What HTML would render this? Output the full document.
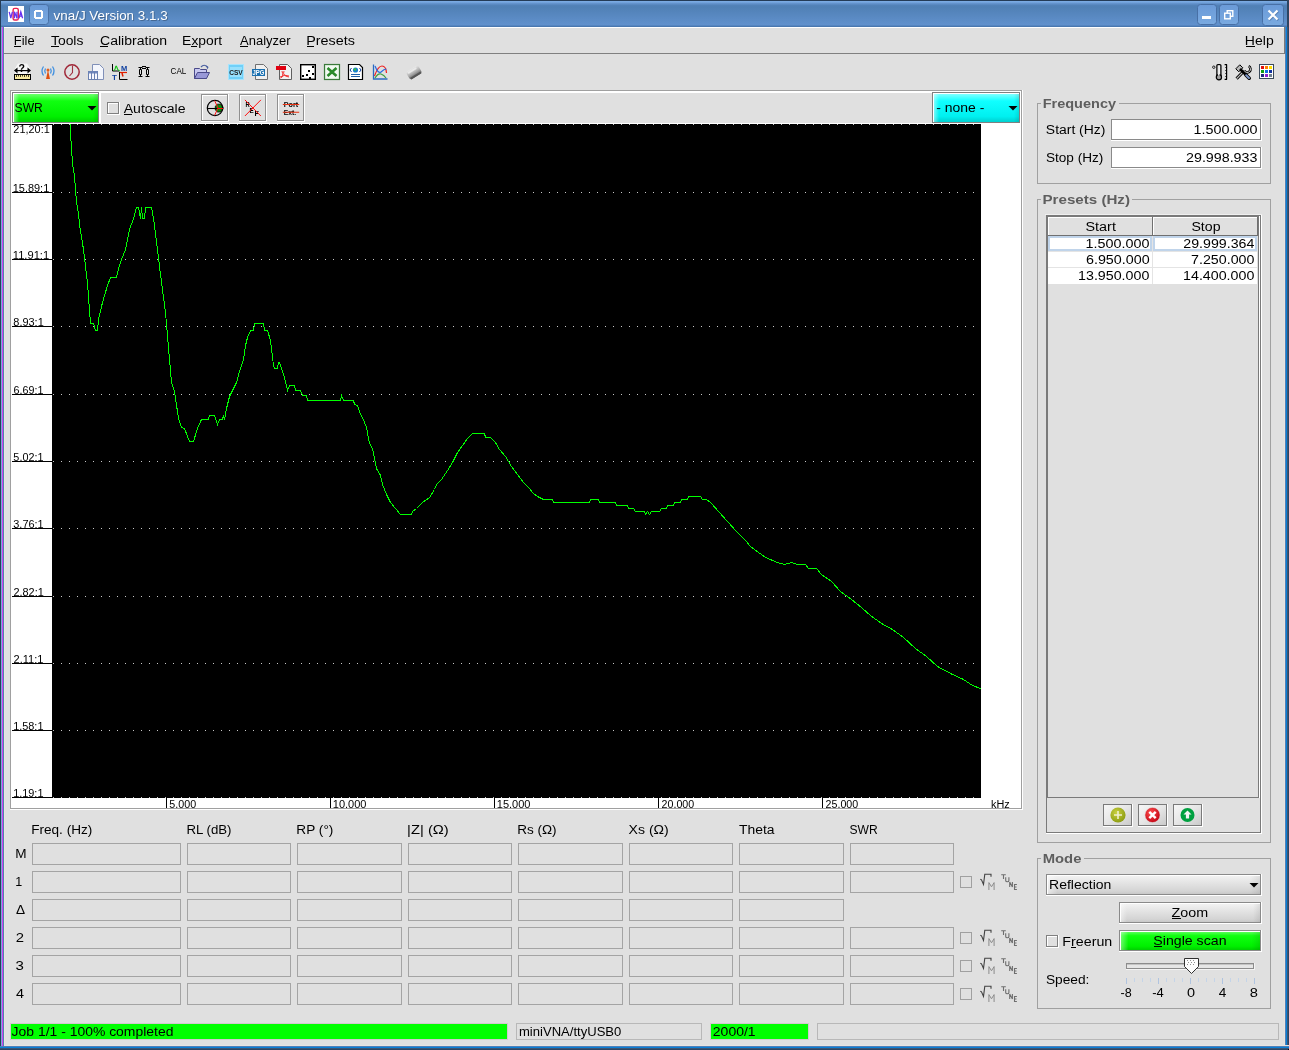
<!DOCTYPE html><html><head><meta charset="utf-8"><title>vna/J</title>
<style>html,body{margin:0;padding:0;background:#e0e0e0;overflow:hidden}svg{display:block;will-change:transform}</style></head><body>
<svg width="1289" height="1050" viewBox="0 0 1289 1050" style="font-family:'Liberation Sans', sans-serif">
<defs>
<linearGradient id="gTitle" x1="0" y1="0" x2="0" y2="27" gradientUnits="userSpaceOnUse">
<stop offset="0" stop-color="#243b56"/><stop offset="0.037" stop-color="#243b56"/>
<stop offset="0.04" stop-color="#7aaae2"/><stop offset="0.074" stop-color="#7aaae2"/>
<stop offset="0.12" stop-color="#6695cf"/><stop offset="0.2" stop-color="#5282b8"/>
<stop offset="0.26" stop-color="#5080b5"/><stop offset="0.93" stop-color="#6191cd"/>
<stop offset="0.963" stop-color="#4a78b0"/><stop offset="1" stop-color="#4a78b0"/>
</linearGradient>
<linearGradient id="gBtnT" x1="0" y1="0" x2="0" y2="1">
<stop offset="0" stop-color="#6a9ad8"/><stop offset="1" stop-color="#7aaae0"/></linearGradient>
<linearGradient id="gGreenV" x1="0" y1="0" x2="0" y2="1">
<stop offset="0" stop-color="#6cff6c"/><stop offset="0.25" stop-color="#10ff10"/><stop offset="0.8" stop-color="#00f000"/><stop offset="1" stop-color="#00d000"/></linearGradient>
<linearGradient id="gGreenH" x1="0" y1="0" x2="1" y2="0">
<stop offset="0" stop-color="#ffffff" stop-opacity="0.45"/><stop offset="0.06" stop-color="#ffffff" stop-opacity="0"/><stop offset="0.94" stop-color="#000" stop-opacity="0"/><stop offset="1" stop-color="#000" stop-opacity="0.10"/></linearGradient>
<linearGradient id="gCyanV" x1="0" y1="0" x2="0" y2="1">
<stop offset="0" stop-color="#80ffff"/><stop offset="0.25" stop-color="#10ffff"/><stop offset="0.8" stop-color="#00f0f0"/><stop offset="1" stop-color="#00d0d0"/></linearGradient>
<linearGradient id="gGray" x1="0" y1="0" x2="0" y2="1">
<stop offset="0" stop-color="#f4f4f4"/><stop offset="0.3" stop-color="#e8e8e8"/><stop offset="0.85" stop-color="#d4d4d4"/><stop offset="1" stop-color="#c8c8c8"/></linearGradient>
<linearGradient id="gGrayH" x1="0" y1="0" x2="1" y2="0">
<stop offset="0" stop-color="#ffffff" stop-opacity="0.5"/><stop offset="0.05" stop-color="#ffffff" stop-opacity="0"/><stop offset="0.95" stop-color="#000" stop-opacity="0"/><stop offset="1" stop-color="#000" stop-opacity="0.08"/></linearGradient>
<linearGradient id="gSmallBtn" x1="0" y1="0" x2="1" y2="1">
<stop offset="0" stop-color="#f8f8f8"/><stop offset="0.5" stop-color="#e6e6e6"/><stop offset="1" stop-color="#c8c8c8"/></linearGradient>
</defs>
<g shape-rendering="crispEdges">
<rect x="0" y="0" width="1289" height="1050" fill="#e0e0e0" />
<rect x="0" y="0" width="1289" height="27" fill="url(#gTitle)" />
<rect x="0" y="0" width="1" height="27" fill="#243b56" />
<rect x="1287" y="0" width="2" height="27" fill="#2e4562" />
</g>
<g>
<rect x="8" y="6" width="16" height="16" fill="#ffffff" shape-rendering="crispEdges"/>
<rect x="13.1" y="8.4" width="5.2" height="11.6" rx="1.6" fill="none" stroke="#e82050" stroke-width="1.4"/>
<path d="M9.2 11.8L10.8 18L12.4 11.8M14.4 18.2V11.8L17 18.2V11.8M19 18.2L20.8 11.8L22.6 18.2M19.6 16.2H22" fill="none" stroke="#6a30f0" stroke-width="1.3"/>
</g>
<rect x="29.5" y="4.5" width="19" height="20" rx="3" fill="url(#gBtnT)" stroke="#4870a6" stroke-width="1"/>
<path d="M35 10h6M34 11h1M41 11h1M35 18h6" stroke="none"/>
<g fill="#ffffff" shape-rendering="crispEdges"><rect x="35" y="10" width="7" height="2"/><rect x="35" y="17" width="7" height="2"/><rect x="34" y="11" width="2" height="7"/><rect x="41" y="11" width="2" height="7"/></g>
<text x="54.59" y="21" font-size="13.5" fill="#000" textLength="114.05" lengthAdjust="spacingAndGlyphs" opacity="0.25">vna/J Version 3.1.3</text>
<text x="53.59" y="20" font-size="13.5" fill="#ffffff" textLength="114.05" lengthAdjust="spacingAndGlyphs" >vna/J Version 3.1.3</text>
<rect x="1197.5" y="4.5" width="19" height="20" rx="3" fill="url(#gBtnT)" stroke="#4870a6" stroke-width="1"/>
<rect x="1202" y="16" width="9" height="3" fill="#fff" shape-rendering="crispEdges"/>
<rect x="1219.5" y="4.5" width="19" height="20" rx="3" fill="url(#gBtnT)" stroke="#4870a6" stroke-width="1"/>
<g fill="none" stroke="#fff" stroke-width="1.4"><rect x="1227.2" y="10.7" width="5.6" height="5.6"/><rect x="1224.7" y="13.2" width="5.6" height="5.6" fill="url(#gBtnT)"/></g>
<rect x="1262.5" y="4.5" width="21" height="21" rx="3" fill="url(#gBtnT)" stroke="#4870a6" stroke-width="1"/>
<path d="M1268.5 10.5L1277.5 19.5M1277.5 10.5L1268.5 19.5" stroke="#3a5a88" stroke-width="2.2" transform="translate(0.7,0.7)" opacity="0.5"/>
<path d="M1268.5 10.5L1277.5 19.5M1277.5 10.5L1268.5 19.5" stroke="#ffffff" stroke-width="2.2"/>
<g shape-rendering="crispEdges">
<rect x="0" y="27" width="1" height="1019" fill="#263d58" />
<rect x="1" y="27" width="1" height="1019" fill="#78aad8" />
<rect x="2" y="27" width="1" height="1019" fill="#d040f0" />
<rect x="3" y="27" width="1" height="1019" fill="#5080b0" />
<rect x="4" y="27" width="1" height="1019" fill="#e8e4e0" />
<rect x="1284" y="27" width="1" height="1023" fill="#e8e4e0" />
<rect x="1285" y="27" width="1" height="1023" fill="#5080b8" />
<rect x="1286" y="27" width="1" height="1023" fill="#0880d8" />
<rect x="1287" y="27" width="1" height="1023" fill="#3c5474" />
<rect x="1288" y="27" width="1" height="1023" fill="#2e4562" />
<rect x="4" y="1045" width="1285" height="1" fill="#e8e4e0" />
<rect x="0" y="1046" width="1289" height="1" fill="#5080b8" />
<rect x="0" y="1047" width="1289" height="1" fill="#0880d8" />
<rect x="0" y="1048" width="1289" height="1" fill="#3c5474" />
<rect x="0" y="1049" width="1289" height="1" fill="#2e4562" />
<rect x="1288" y="1049" width="1" height="1" fill="#000" />
<rect x="4" y="27" width="1280" height="1" fill="#ffffff" />
<rect x="4" y="53" width="1281" height="1" fill="#808080" />
<rect x="1284" y="27" width="1" height="27" fill="#7a7a7a" />
</g>
<text x="13.86" y="45" font-size="12.5" fill="#000" textLength="20.73" lengthAdjust="spacingAndGlyphs" >File</text>
<text x="50.98" y="45" font-size="12.5" fill="#000" textLength="32.43" lengthAdjust="spacingAndGlyphs" >Tools</text>
<text x="100.01" y="45" font-size="12.5" fill="#000" textLength="67.16" lengthAdjust="spacingAndGlyphs" >Calibration</text>
<text x="182.14" y="45" font-size="12.5" fill="#000" textLength="40.11" lengthAdjust="spacingAndGlyphs" >Export</text>
<text x="240.05" y="45" font-size="12.5" fill="#000" textLength="50.49" lengthAdjust="spacingAndGlyphs" >Analyzer</text>
<text x="306.20" y="45" font-size="12.5" fill="#000" textLength="48.72" lengthAdjust="spacingAndGlyphs" >Presets</text>
<text x="1244.88" y="45" font-size="12.5" fill="#000" textLength="28.81" lengthAdjust="spacingAndGlyphs" >Help</text>
<g fill="#000" shape-rendering="crispEdges">
<rect x="14" y="46" width="7" height="1" fill="#000" />
<rect x="51" y="46" width="8" height="1" fill="#000" />
<rect x="100" y="46" width="8" height="1" fill="#000" />
<rect x="191" y="46" width="6" height="1" fill="#000" />
<rect x="240" y="46" width="8" height="1" fill="#000" />
<rect x="307" y="46" width="7" height="1" fill="#000" />
<rect x="1246" y="46" width="9" height="1" fill="#000" />
</g>
<g transform="translate(14,64)">
<path d="M4 -0.5h9l3 5v6h-15v-6z" fill="#f6f6f6"/>
<text x="4.6" y="7.6" font-size="10.5" font-weight="bold" fill="#000">?</text>
<path d="M0 6.5l3.5-3v6zM17 6.5l-3.5-3v6z" fill="#000"/><rect x="2" y="6" width="13" height="1.2" fill="#000"/>
<rect x="0.5" y="10.5" width="16" height="5" fill="#f8eaa0" stroke="#000" stroke-width="1"/>
<path d="M2.5 11v2M4.5 11v1.5M6.5 11v2M8.5 11v1.5M10.5 11v2M12.5 11v1.5M14.5 11v2" stroke="#403a20" stroke-width="1"/>
</g>
<g transform="translate(40,64)" fill="none" stroke-width="1.3">
<path d="M3.5 2.5Q0.5 7 3.5 11.5M12.5 2.5Q15.5 7 12.5 11.5" stroke="#4090e0"/>
<path d="M5.5 4.5Q4 7 5.5 9.5M10.5 4.5Q12 7 10.5 9.5" stroke="#4090e0"/>
<path d="M6 15L8 6L10 15z" fill="#e05010" stroke="none"/><circle cx="8" cy="6" r="1.5" fill="#e06020" stroke="none"/>
</g>
<g transform="translate(64,64)">
<circle cx="8" cy="8" r="7.2" fill="none" stroke="#a02838" stroke-width="1.5"/>
<path d="M8.5 1.5V8.5L5.5 12" fill="none" stroke="#a03040" stroke-width="1.1"/>
</g>
<g transform="translate(88,64)">
<path d="M4.5 0.5h7l4 4v11h-11z" fill="#f4f6fc" stroke="#8090b8" stroke-width="1"/>
<rect x="0.5" y="7.5" width="9" height="8" fill="#f8f8ff" stroke="#6a80b0" stroke-width="1"/>
<rect x="0.5" y="7.5" width="9" height="2" fill="#7088c0"/>
<path d="M3.5 8v7M6.5 8v7" stroke="#6a80b0" stroke-width="1"/>
</g>
<g transform="translate(112,64)">
<path d="M0.5 0v7h7" fill="none" stroke="#000" stroke-width="1"/>
<path d="M1.5 6.5Q3 6.5 3.5 3.5Q4 0.5 5 3.5Q5.5 6.5 7.5 6.5" fill="none" stroke="#10c010" stroke-width="1.1"/>
<text x="9" y="7" font-size="7.5" font-weight="bold" fill="#1040a0">M</text>
<text x="0" y="16" font-size="8" font-weight="bold" fill="#1040a0">T</text>
<path d="M7.5 8v7.5h8M8 8.5h7" fill="none" stroke="#000" stroke-width="1"/>
<path d="M8 8.5h7" stroke="#e02000" stroke-width="1.2"/><path d="M10 9l1 3.5" stroke="#e02000" stroke-width="1.5"/>
</g>
<g transform="translate(138,66)" fill="none" stroke="#000" stroke-width="1">
<path d="M0.5 1.5h4M7.5 1.5h4M4 0.5h4M4 2.5h4"/>
<path d="M2.5 1.5v2M1.5 3.5h2v5h-2zM2.5 8.5v2M0.5 10.5h4"/>
<path d="M9.5 1.5v2M8.5 3.5h2v5h-2zM9.5 8.5v2M7.5 10.5h4"/>
</g>
<text x="170.57" y="74" font-size="8.5" fill="#000" textLength="15.70" lengthAdjust="spacingAndGlyphs" >CAL</text>
<g transform="translate(194,64)">
<path d="M0.5 4.5h5l1 1h6v9h-12z" fill="#c8c8f0" stroke="#4a4a8a" stroke-width="1"/>
<path d="M0.5 14.5L3.5 8.5h12l-3 6z" fill="#9898d8" stroke="#4a4a8a" stroke-width="1"/>
<path d="M7 3Q10 -0.5 13.5 3" fill="none" stroke="#4a60a0" stroke-width="1.2"/><path d="M12 1.5l2.5 1.5-1 2.5z" fill="#4a60a0"/>
</g>
<g transform="translate(228,64)">
<rect x="0" y="0" width="16" height="16" fill="#a8e4fc"/><rect x="1" y="1" width="14" height="14" fill="#70d0f8"/>
<rect x="2" y="3" width="12" height="10" fill="#98e0fc"/>
<text x="1.2" y="11" font-size="7" font-weight="bold" fill="#202020" textLength="13.6" lengthAdjust="spacingAndGlyphs">CSV</text>
</g>
<g transform="translate(252,64)">
<path d="M3.5 0.5h8l4 4v11h-12z" fill="#f0f0f0" stroke="#707070" stroke-width="1"/>
<rect x="0" y="5" width="13" height="7" fill="#1a70b0"/>
<text x="0.6" y="11" font-size="7" font-weight="bold" fill="#fff" textLength="11.8" lengthAdjust="spacingAndGlyphs">JPG</text>
</g>
<g transform="translate(276,64)">
<path d="M3.5 0.5h8l4 4v11h-12z" fill="#f2f2f2" stroke="#606060" stroke-width="1"/>
<rect x="0" y="2" width="10" height="4" fill="#e00010"/>
<path d="M6 7Q8 13 4.5 14M8 7Q6 12 13 13M4 13Q9 10 13 12" fill="none" stroke="#f02020" stroke-width="0.9"/>
</g>
<g transform="translate(300,64)">
<rect x="0.7" y="0.7" width="14.6" height="14.6" fill="#fff" stroke="#000" stroke-width="1.4"/>
<g fill="#000"><rect x="12" y="2" width="2" height="2"/><rect x="8" y="6" width="2" height="2"/><rect x="12" y="9" width="2" height="2"/><rect x="6" y="10" width="2" height="2"/><rect x="2" y="11" width="2" height="2"/><rect x="9" y="13" width="2" height="2"/></g>
</g>
<g transform="translate(324,64)">
<rect x="0.5" y="0.5" width="15" height="15" fill="#e8f4e8" stroke="#3a7a3a" stroke-width="1.2"/>
<rect x="2" y="2" width="12" height="12" fill="#f2faf2"/>
<path d="M3.5 4L12.5 12M12.5 4L3.5 12" stroke="#2a8a2a" stroke-width="2.6"/>
</g>
<g transform="translate(348,64)">
<path d="M0.5 0.5h11l3 3v12h-14z" fill="#fff" stroke="#000" stroke-width="1.2"/>
<circle cx="7.5" cy="6" r="2.6" fill="#1a80d0"/><circle cx="7" cy="5.5" r="1.2" fill="#40c040"/>
<path d="M3.5 4l-1.5 2 1.5 2M11.5 4l1.5 2-1.5 2" fill="none" stroke="#1040a0" stroke-width="1"/>
<path d="M3 10.5h9M3 12.5h9" stroke="#2060a8" stroke-width="1"/>
</g>
<g transform="translate(373,64)" fill="none">
<path d="M0.5 0.5v14.5h14" stroke="#2a6ac0" stroke-width="1.3"/>
<path d="M1.5 12Q5 2 9 2Q13 2 13.5 9" stroke="#f02020" stroke-width="1.2"/>
<path d="M2 2Q5 10 8 8Q11 5 13.5 5" stroke="#2a6ae0" stroke-width="1.2"/>
<path d="M2 14Q5 9 8 10Q11 11 13 14" stroke="#40a040" stroke-width="1.2"/>
</g>
<defs><linearGradient id="gChip" x1="0" y1="0" x2="0" y2="1"><stop offset="0" stop-color="#e8e8e8"/><stop offset="0.5" stop-color="#b0b0b0"/><stop offset="1" stop-color="#606060"/></linearGradient></defs>
<g transform="translate(414,72.5) rotate(-32)">
<rect x="-7" y="-4.5" width="14" height="9" rx="2.5" fill="url(#gChip)"/>
<rect x="-6" y="2.5" width="12" height="2" fill="#505050" opacity="0.8"/>
<rect x="-5.5" y="-3.5" width="10" height="2" rx="1" fill="#f4f4f4" opacity="0.7"/>
</g>
<g transform="translate(1212,64)">
<circle cx="1.8" cy="3.2" r="1.2" fill="#fff" stroke="#000" stroke-width="0.9"/>
<path d="M4.9 12V1.6Q4.9 0.6 5.9 0.6H7.9Q8.9 0.6 8.9 1.6V12" fill="#fff" stroke="#000" stroke-width="1.3"/>
<circle cx="6.9" cy="13.2" r="2.6" fill="#a0a0a0" stroke="#000" stroke-width="1.2"/>
<rect x="6" y="2" width="1.6" height="9.5" fill="#e8e8e8"/>
<path d="M14.6 0.5V15.5M12.6 0.6H15M13.4 3.5H14.6M13.4 6.5H14.6M13.4 9.5H14.6M13.4 12.5H14.6M12.6 15.4H15" fill="none" stroke="#000" stroke-width="1.2"/>
</g>
<g transform="translate(1235,64)">
<path d="M9.2 6.8L1.6 14.6" stroke="#000" stroke-width="3"/><path d="M9.2 6.8L1.6 14.6" stroke="#c8c8c8" stroke-width="1.2"/>
<path d="M0.8 4.8L4.8 0.8L7.8 3.8L3.8 7.8z" fill="#b8b8b8" stroke="#000" stroke-width="1"/>
<path d="M5 5L12 12" stroke="#000" stroke-width="2.6"/>
<path d="M11 11L14.2 14.2" stroke="#000" stroke-width="3.6" stroke-linecap="round"/><path d="M11.2 11.2L14 14" stroke="#8098c8" stroke-width="2" stroke-linecap="round"/>
<path d="M13.6 2.2A3.3 3.3 0 1 1 9.2 6.6" fill="none" stroke="#000" stroke-width="2.6"/><path d="M13.6 2.2A3.3 3.3 0 1 1 9.2 6.6" fill="none" stroke="#d8d8d8" stroke-width="1"/>
</g>
<g transform="translate(1259,64)" shape-rendering="crispEdges">
<rect x="0" y="0" width="15" height="15" fill="#3a4a5a"/><rect x="1" y="1" width="13" height="13" fill="#fff"/>
<rect x="2" y="2" width="3" height="3" fill="#e01010"/>
<rect x="6" y="2" width="3" height="3" fill="#ff8000"/>
<rect x="10" y="2" width="3" height="3" fill="#ffe000"/>
<rect x="2" y="6" width="3" height="3" fill="#10a010"/>
<rect x="6" y="6" width="3" height="3" fill="#1070e0"/>
<rect x="10" y="6" width="3" height="3" fill="#1030a0"/>
<rect x="2" y="10" width="3" height="3" fill="#202880"/>
<rect x="6" y="10" width="3" height="3" fill="#9020d0"/>
<rect x="10" y="10" width="3" height="3" fill="#708090"/>
</g>
<g shape-rendering="crispEdges">
<rect x="10" y="90" width="1012" height="719" fill="#ffffff" />
<rect x="10" y="90" width="1012" height="1" fill="#a0a0a0" />
<rect x="10" y="90" width="1" height="719" fill="#a0a0a0" />
<rect x="1021" y="90" width="1" height="719" fill="#a0a0a0" />
<rect x="10" y="808" width="1012" height="1" fill="#a0a0a0" />
<rect x="1022" y="90" width="1" height="720" fill="#ffffff" />
<rect x="10" y="809" width="1013" height="1" fill="#ffffff" />
<rect x="101" y="93" width="831" height="30" fill="#e0e0e0" />
<rect x="920" y="93" width="12" height="30" fill="#e0e0e0" />
<rect x="12" y="92" width="87" height="31" fill="#808080" />
<rect x="13" y="93" width="85" height="29" fill="#ffffff" />
<rect x="14" y="94" width="84" height="28" fill="url(#gGreenV)" />
<rect x="14" y="94" width="84" height="28" fill="url(#gGreenH)" />
</g>
<text x="14.59" y="112" font-size="12.5" fill="#000" textLength="28.18" lengthAdjust="spacingAndGlyphs" >SWR</text>
<path d="M87.5 106h9l-4.5 4.5z" fill="#000"/>
<g shape-rendering="crispEdges">
<rect x="107" y="102" width="12" height="1" fill="#808080" />
<rect x="107" y="113" width="12" height="1" fill="#808080" />
<rect x="107" y="102" width="1" height="12" fill="#808080" />
<rect x="118" y="102" width="1" height="12" fill="#808080" />
<rect x="108" y="103" width="10" height="1" fill="#ffffff" />
<rect x="108" y="103" width="1" height="10" fill="#ffffff" />
<rect x="119" y="102" width="1" height="13" fill="#ffffff" />
<rect x="107" y="114" width="13" height="1" fill="#ffffff" />
</g>
<text x="123.67" y="113" font-size="12.5" fill="#000" textLength="61.86" lengthAdjust="spacingAndGlyphs" >Autoscale</text>
<rect x="124" y="114" width="8" height="1" fill="#000" shape-rendering="crispEdges"/>
<g shape-rendering="crispEdges">
<rect x="201" y="94" width="27" height="1" fill="#909090" />
<rect x="201" y="120" width="27" height="1" fill="#909090" />
<rect x="201" y="94" width="1" height="27" fill="#909090" />
<rect x="227" y="94" width="1" height="27" fill="#909090" />
<rect x="202" y="95" width="25" height="1" fill="#ffffff" />
<rect x="202" y="95" width="1" height="25" fill="#ffffff" />
<rect x="228" y="94" width="1" height="28" fill="#ffffff" />
<rect x="201" y="121" width="28" height="1" fill="#ffffff" />
</g>
<g shape-rendering="crispEdges">
<rect x="239" y="94" width="27" height="1" fill="#909090" />
<rect x="239" y="120" width="27" height="1" fill="#909090" />
<rect x="239" y="94" width="1" height="27" fill="#909090" />
<rect x="265" y="94" width="1" height="27" fill="#909090" />
<rect x="240" y="95" width="25" height="1" fill="#ffffff" />
<rect x="240" y="95" width="1" height="25" fill="#ffffff" />
<rect x="266" y="94" width="1" height="28" fill="#ffffff" />
<rect x="239" y="121" width="28" height="1" fill="#ffffff" />
</g>
<g shape-rendering="crispEdges">
<rect x="277" y="94" width="27" height="1" fill="#909090" />
<rect x="277" y="120" width="27" height="1" fill="#909090" />
<rect x="277" y="94" width="1" height="27" fill="#909090" />
<rect x="303" y="94" width="1" height="27" fill="#909090" />
<rect x="278" y="95" width="25" height="1" fill="#ffffff" />
<rect x="278" y="95" width="1" height="25" fill="#ffffff" />
<rect x="304" y="94" width="1" height="28" fill="#ffffff" />
<rect x="277" y="121" width="28" height="1" fill="#ffffff" />
</g>
<g fill="none">
<path d="M215.3 106.2L217.5 104.2H220.5L222.6 106.4L223.2 108L222.6 109.8L220.5 112H217.5L215.3 110z" fill="#0a8a0a" stroke="#000" stroke-width="0.8"/>
<circle cx="215" cy="108" r="7.7" stroke="#000" stroke-width="1.2"/>
<path d="M207.5 108.5H221" stroke="#000" stroke-width="1.1"/>
<path d="M214.6 100.6L218 108L214.6 115.4M218 108.5H223" stroke="#ff1010" stroke-width="1"/>
</g>
<text x="245.6" y="106.9" font-size="8" font-weight="bold" fill="#000" textLength="4.2" lengthAdjust="spacingAndGlyphs">R</text>
<text x="249.6" y="112.7" font-size="7" font-weight="bold" fill="#000" textLength="4.2" lengthAdjust="spacingAndGlyphs">E</text>
<text x="254.6" y="115.8" font-size="7.4" font-weight="bold" fill="#000" textLength="4.5" lengthAdjust="spacingAndGlyphs">F</text>
<path d="M244.9 99.9L260.9 116M260.9 99.9L244.9 116" stroke="#ff1010" stroke-width="1"/>
<circle cx="252.9" cy="108" r="1" fill="#ff1010"/>
<text x="283.7" y="107.1" font-size="8" font-weight="bold" fill="#000" textLength="14.4" lengthAdjust="spacingAndGlyphs">Port</text>
<text x="283.7" y="115.1" font-size="8" font-weight="bold" fill="#000" textLength="12.3" lengthAdjust="spacingAndGlyphs">Ext.</text>
<path d="M282.8 104.5h16.4M282.8 112.3h16.4" stroke="#e83010" stroke-width="1.1"/>
<g shape-rendering="crispEdges">
<rect x="932" y="92" width="88" height="31" fill="#808080" />
<rect x="933" y="93" width="86" height="29" fill="#ffffff" />
<rect x="934" y="94" width="85" height="28" fill="url(#gCyanV)" />
<rect x="934" y="94" width="85" height="28" fill="url(#gGreenH)" />
<rect x="920" y="91" width="100" height="1" fill="#ffffff" />
</g>
<text x="936.26" y="112" font-size="12.5" fill="#000" textLength="48.11" lengthAdjust="spacingAndGlyphs" >- none -</text>
<path d="M1008.5 106h9l-4.5 4.5z" fill="#000"/>
<g shape-rendering="crispEdges">
<rect x="52" y="124" width="929" height="674" fill="#000000" />
<rect x="12" y="124" width="40" height="1" fill="#000" />
<g fill="#c8c8c8"><rect x="53" y="124" width="1" height="1"/><rect x="61" y="124" width="1" height="1"/><rect x="69" y="124" width="1" height="1"/><rect x="77" y="124" width="1" height="1"/><rect x="85" y="124" width="1" height="1"/><rect x="93" y="124" width="1" height="1"/><rect x="101" y="124" width="1" height="1"/><rect x="109" y="124" width="1" height="1"/><rect x="117" y="124" width="1" height="1"/><rect x="125" y="124" width="1" height="1"/><rect x="133" y="124" width="1" height="1"/><rect x="141" y="124" width="1" height="1"/><rect x="149" y="124" width="1" height="1"/><rect x="157" y="124" width="1" height="1"/><rect x="165" y="124" width="1" height="1"/><rect x="173" y="124" width="1" height="1"/><rect x="181" y="124" width="1" height="1"/><rect x="189" y="124" width="1" height="1"/><rect x="197" y="124" width="1" height="1"/><rect x="205" y="124" width="1" height="1"/><rect x="213" y="124" width="1" height="1"/><rect x="221" y="124" width="1" height="1"/><rect x="229" y="124" width="1" height="1"/><rect x="237" y="124" width="1" height="1"/><rect x="245" y="124" width="1" height="1"/><rect x="253" y="124" width="1" height="1"/><rect x="261" y="124" width="1" height="1"/><rect x="269" y="124" width="1" height="1"/><rect x="277" y="124" width="1" height="1"/><rect x="285" y="124" width="1" height="1"/><rect x="293" y="124" width="1" height="1"/><rect x="301" y="124" width="1" height="1"/><rect x="309" y="124" width="1" height="1"/><rect x="317" y="124" width="1" height="1"/><rect x="325" y="124" width="1" height="1"/><rect x="333" y="124" width="1" height="1"/><rect x="341" y="124" width="1" height="1"/><rect x="349" y="124" width="1" height="1"/><rect x="357" y="124" width="1" height="1"/><rect x="365" y="124" width="1" height="1"/><rect x="373" y="124" width="1" height="1"/><rect x="381" y="124" width="1" height="1"/><rect x="389" y="124" width="1" height="1"/><rect x="397" y="124" width="1" height="1"/><rect x="405" y="124" width="1" height="1"/><rect x="413" y="124" width="1" height="1"/><rect x="421" y="124" width="1" height="1"/><rect x="429" y="124" width="1" height="1"/><rect x="437" y="124" width="1" height="1"/><rect x="445" y="124" width="1" height="1"/><rect x="453" y="124" width="1" height="1"/><rect x="461" y="124" width="1" height="1"/><rect x="469" y="124" width="1" height="1"/><rect x="477" y="124" width="1" height="1"/><rect x="485" y="124" width="1" height="1"/><rect x="493" y="124" width="1" height="1"/><rect x="501" y="124" width="1" height="1"/><rect x="509" y="124" width="1" height="1"/><rect x="517" y="124" width="1" height="1"/><rect x="525" y="124" width="1" height="1"/><rect x="533" y="124" width="1" height="1"/><rect x="541" y="124" width="1" height="1"/><rect x="549" y="124" width="1" height="1"/><rect x="557" y="124" width="1" height="1"/><rect x="565" y="124" width="1" height="1"/><rect x="573" y="124" width="1" height="1"/><rect x="581" y="124" width="1" height="1"/><rect x="589" y="124" width="1" height="1"/><rect x="597" y="124" width="1" height="1"/><rect x="605" y="124" width="1" height="1"/><rect x="613" y="124" width="1" height="1"/><rect x="621" y="124" width="1" height="1"/><rect x="629" y="124" width="1" height="1"/><rect x="637" y="124" width="1" height="1"/><rect x="645" y="124" width="1" height="1"/><rect x="653" y="124" width="1" height="1"/><rect x="661" y="124" width="1" height="1"/><rect x="669" y="124" width="1" height="1"/><rect x="677" y="124" width="1" height="1"/><rect x="685" y="124" width="1" height="1"/><rect x="693" y="124" width="1" height="1"/><rect x="701" y="124" width="1" height="1"/><rect x="709" y="124" width="1" height="1"/><rect x="717" y="124" width="1" height="1"/><rect x="725" y="124" width="1" height="1"/><rect x="733" y="124" width="1" height="1"/><rect x="741" y="124" width="1" height="1"/><rect x="749" y="124" width="1" height="1"/><rect x="757" y="124" width="1" height="1"/><rect x="765" y="124" width="1" height="1"/><rect x="773" y="124" width="1" height="1"/><rect x="781" y="124" width="1" height="1"/><rect x="789" y="124" width="1" height="1"/><rect x="797" y="124" width="1" height="1"/><rect x="805" y="124" width="1" height="1"/><rect x="813" y="124" width="1" height="1"/><rect x="821" y="124" width="1" height="1"/><rect x="829" y="124" width="1" height="1"/><rect x="837" y="124" width="1" height="1"/><rect x="845" y="124" width="1" height="1"/><rect x="853" y="124" width="1" height="1"/><rect x="861" y="124" width="1" height="1"/><rect x="869" y="124" width="1" height="1"/><rect x="877" y="124" width="1" height="1"/><rect x="885" y="124" width="1" height="1"/><rect x="893" y="124" width="1" height="1"/><rect x="901" y="124" width="1" height="1"/><rect x="909" y="124" width="1" height="1"/><rect x="917" y="124" width="1" height="1"/><rect x="925" y="124" width="1" height="1"/><rect x="933" y="124" width="1" height="1"/><rect x="941" y="124" width="1" height="1"/><rect x="949" y="124" width="1" height="1"/><rect x="957" y="124" width="1" height="1"/><rect x="965" y="124" width="1" height="1"/><rect x="973" y="124" width="1" height="1"/></g>
<rect x="12" y="192" width="40" height="1" fill="#000" />
<g fill="#c8c8c8"><rect x="53" y="192" width="1" height="1"/><rect x="61" y="192" width="1" height="1"/><rect x="69" y="192" width="1" height="1"/><rect x="77" y="192" width="1" height="1"/><rect x="85" y="192" width="1" height="1"/><rect x="93" y="192" width="1" height="1"/><rect x="101" y="192" width="1" height="1"/><rect x="109" y="192" width="1" height="1"/><rect x="117" y="192" width="1" height="1"/><rect x="125" y="192" width="1" height="1"/><rect x="133" y="192" width="1" height="1"/><rect x="141" y="192" width="1" height="1"/><rect x="149" y="192" width="1" height="1"/><rect x="157" y="192" width="1" height="1"/><rect x="165" y="192" width="1" height="1"/><rect x="173" y="192" width="1" height="1"/><rect x="181" y="192" width="1" height="1"/><rect x="189" y="192" width="1" height="1"/><rect x="197" y="192" width="1" height="1"/><rect x="205" y="192" width="1" height="1"/><rect x="213" y="192" width="1" height="1"/><rect x="221" y="192" width="1" height="1"/><rect x="229" y="192" width="1" height="1"/><rect x="237" y="192" width="1" height="1"/><rect x="245" y="192" width="1" height="1"/><rect x="253" y="192" width="1" height="1"/><rect x="261" y="192" width="1" height="1"/><rect x="269" y="192" width="1" height="1"/><rect x="277" y="192" width="1" height="1"/><rect x="285" y="192" width="1" height="1"/><rect x="293" y="192" width="1" height="1"/><rect x="301" y="192" width="1" height="1"/><rect x="309" y="192" width="1" height="1"/><rect x="317" y="192" width="1" height="1"/><rect x="325" y="192" width="1" height="1"/><rect x="333" y="192" width="1" height="1"/><rect x="341" y="192" width="1" height="1"/><rect x="349" y="192" width="1" height="1"/><rect x="357" y="192" width="1" height="1"/><rect x="365" y="192" width="1" height="1"/><rect x="373" y="192" width="1" height="1"/><rect x="381" y="192" width="1" height="1"/><rect x="389" y="192" width="1" height="1"/><rect x="397" y="192" width="1" height="1"/><rect x="405" y="192" width="1" height="1"/><rect x="413" y="192" width="1" height="1"/><rect x="421" y="192" width="1" height="1"/><rect x="429" y="192" width="1" height="1"/><rect x="437" y="192" width="1" height="1"/><rect x="445" y="192" width="1" height="1"/><rect x="453" y="192" width="1" height="1"/><rect x="461" y="192" width="1" height="1"/><rect x="469" y="192" width="1" height="1"/><rect x="477" y="192" width="1" height="1"/><rect x="485" y="192" width="1" height="1"/><rect x="493" y="192" width="1" height="1"/><rect x="501" y="192" width="1" height="1"/><rect x="509" y="192" width="1" height="1"/><rect x="517" y="192" width="1" height="1"/><rect x="525" y="192" width="1" height="1"/><rect x="533" y="192" width="1" height="1"/><rect x="541" y="192" width="1" height="1"/><rect x="549" y="192" width="1" height="1"/><rect x="557" y="192" width="1" height="1"/><rect x="565" y="192" width="1" height="1"/><rect x="573" y="192" width="1" height="1"/><rect x="581" y="192" width="1" height="1"/><rect x="589" y="192" width="1" height="1"/><rect x="597" y="192" width="1" height="1"/><rect x="605" y="192" width="1" height="1"/><rect x="613" y="192" width="1" height="1"/><rect x="621" y="192" width="1" height="1"/><rect x="629" y="192" width="1" height="1"/><rect x="637" y="192" width="1" height="1"/><rect x="645" y="192" width="1" height="1"/><rect x="653" y="192" width="1" height="1"/><rect x="661" y="192" width="1" height="1"/><rect x="669" y="192" width="1" height="1"/><rect x="677" y="192" width="1" height="1"/><rect x="685" y="192" width="1" height="1"/><rect x="693" y="192" width="1" height="1"/><rect x="701" y="192" width="1" height="1"/><rect x="709" y="192" width="1" height="1"/><rect x="717" y="192" width="1" height="1"/><rect x="725" y="192" width="1" height="1"/><rect x="733" y="192" width="1" height="1"/><rect x="741" y="192" width="1" height="1"/><rect x="749" y="192" width="1" height="1"/><rect x="757" y="192" width="1" height="1"/><rect x="765" y="192" width="1" height="1"/><rect x="773" y="192" width="1" height="1"/><rect x="781" y="192" width="1" height="1"/><rect x="789" y="192" width="1" height="1"/><rect x="797" y="192" width="1" height="1"/><rect x="805" y="192" width="1" height="1"/><rect x="813" y="192" width="1" height="1"/><rect x="821" y="192" width="1" height="1"/><rect x="829" y="192" width="1" height="1"/><rect x="837" y="192" width="1" height="1"/><rect x="845" y="192" width="1" height="1"/><rect x="853" y="192" width="1" height="1"/><rect x="861" y="192" width="1" height="1"/><rect x="869" y="192" width="1" height="1"/><rect x="877" y="192" width="1" height="1"/><rect x="885" y="192" width="1" height="1"/><rect x="893" y="192" width="1" height="1"/><rect x="901" y="192" width="1" height="1"/><rect x="909" y="192" width="1" height="1"/><rect x="917" y="192" width="1" height="1"/><rect x="925" y="192" width="1" height="1"/><rect x="933" y="192" width="1" height="1"/><rect x="941" y="192" width="1" height="1"/><rect x="949" y="192" width="1" height="1"/><rect x="957" y="192" width="1" height="1"/><rect x="965" y="192" width="1" height="1"/><rect x="973" y="192" width="1" height="1"/></g>
<rect x="12" y="259" width="40" height="1" fill="#000" />
<g fill="#c8c8c8"><rect x="53" y="259" width="1" height="1"/><rect x="61" y="259" width="1" height="1"/><rect x="69" y="259" width="1" height="1"/><rect x="77" y="259" width="1" height="1"/><rect x="85" y="259" width="1" height="1"/><rect x="93" y="259" width="1" height="1"/><rect x="101" y="259" width="1" height="1"/><rect x="109" y="259" width="1" height="1"/><rect x="117" y="259" width="1" height="1"/><rect x="125" y="259" width="1" height="1"/><rect x="133" y="259" width="1" height="1"/><rect x="141" y="259" width="1" height="1"/><rect x="149" y="259" width="1" height="1"/><rect x="157" y="259" width="1" height="1"/><rect x="165" y="259" width="1" height="1"/><rect x="173" y="259" width="1" height="1"/><rect x="181" y="259" width="1" height="1"/><rect x="189" y="259" width="1" height="1"/><rect x="197" y="259" width="1" height="1"/><rect x="205" y="259" width="1" height="1"/><rect x="213" y="259" width="1" height="1"/><rect x="221" y="259" width="1" height="1"/><rect x="229" y="259" width="1" height="1"/><rect x="237" y="259" width="1" height="1"/><rect x="245" y="259" width="1" height="1"/><rect x="253" y="259" width="1" height="1"/><rect x="261" y="259" width="1" height="1"/><rect x="269" y="259" width="1" height="1"/><rect x="277" y="259" width="1" height="1"/><rect x="285" y="259" width="1" height="1"/><rect x="293" y="259" width="1" height="1"/><rect x="301" y="259" width="1" height="1"/><rect x="309" y="259" width="1" height="1"/><rect x="317" y="259" width="1" height="1"/><rect x="325" y="259" width="1" height="1"/><rect x="333" y="259" width="1" height="1"/><rect x="341" y="259" width="1" height="1"/><rect x="349" y="259" width="1" height="1"/><rect x="357" y="259" width="1" height="1"/><rect x="365" y="259" width="1" height="1"/><rect x="373" y="259" width="1" height="1"/><rect x="381" y="259" width="1" height="1"/><rect x="389" y="259" width="1" height="1"/><rect x="397" y="259" width="1" height="1"/><rect x="405" y="259" width="1" height="1"/><rect x="413" y="259" width="1" height="1"/><rect x="421" y="259" width="1" height="1"/><rect x="429" y="259" width="1" height="1"/><rect x="437" y="259" width="1" height="1"/><rect x="445" y="259" width="1" height="1"/><rect x="453" y="259" width="1" height="1"/><rect x="461" y="259" width="1" height="1"/><rect x="469" y="259" width="1" height="1"/><rect x="477" y="259" width="1" height="1"/><rect x="485" y="259" width="1" height="1"/><rect x="493" y="259" width="1" height="1"/><rect x="501" y="259" width="1" height="1"/><rect x="509" y="259" width="1" height="1"/><rect x="517" y="259" width="1" height="1"/><rect x="525" y="259" width="1" height="1"/><rect x="533" y="259" width="1" height="1"/><rect x="541" y="259" width="1" height="1"/><rect x="549" y="259" width="1" height="1"/><rect x="557" y="259" width="1" height="1"/><rect x="565" y="259" width="1" height="1"/><rect x="573" y="259" width="1" height="1"/><rect x="581" y="259" width="1" height="1"/><rect x="589" y="259" width="1" height="1"/><rect x="597" y="259" width="1" height="1"/><rect x="605" y="259" width="1" height="1"/><rect x="613" y="259" width="1" height="1"/><rect x="621" y="259" width="1" height="1"/><rect x="629" y="259" width="1" height="1"/><rect x="637" y="259" width="1" height="1"/><rect x="645" y="259" width="1" height="1"/><rect x="653" y="259" width="1" height="1"/><rect x="661" y="259" width="1" height="1"/><rect x="669" y="259" width="1" height="1"/><rect x="677" y="259" width="1" height="1"/><rect x="685" y="259" width="1" height="1"/><rect x="693" y="259" width="1" height="1"/><rect x="701" y="259" width="1" height="1"/><rect x="709" y="259" width="1" height="1"/><rect x="717" y="259" width="1" height="1"/><rect x="725" y="259" width="1" height="1"/><rect x="733" y="259" width="1" height="1"/><rect x="741" y="259" width="1" height="1"/><rect x="749" y="259" width="1" height="1"/><rect x="757" y="259" width="1" height="1"/><rect x="765" y="259" width="1" height="1"/><rect x="773" y="259" width="1" height="1"/><rect x="781" y="259" width="1" height="1"/><rect x="789" y="259" width="1" height="1"/><rect x="797" y="259" width="1" height="1"/><rect x="805" y="259" width="1" height="1"/><rect x="813" y="259" width="1" height="1"/><rect x="821" y="259" width="1" height="1"/><rect x="829" y="259" width="1" height="1"/><rect x="837" y="259" width="1" height="1"/><rect x="845" y="259" width="1" height="1"/><rect x="853" y="259" width="1" height="1"/><rect x="861" y="259" width="1" height="1"/><rect x="869" y="259" width="1" height="1"/><rect x="877" y="259" width="1" height="1"/><rect x="885" y="259" width="1" height="1"/><rect x="893" y="259" width="1" height="1"/><rect x="901" y="259" width="1" height="1"/><rect x="909" y="259" width="1" height="1"/><rect x="917" y="259" width="1" height="1"/><rect x="925" y="259" width="1" height="1"/><rect x="933" y="259" width="1" height="1"/><rect x="941" y="259" width="1" height="1"/><rect x="949" y="259" width="1" height="1"/><rect x="957" y="259" width="1" height="1"/><rect x="965" y="259" width="1" height="1"/><rect x="973" y="259" width="1" height="1"/></g>
<rect x="12" y="326" width="40" height="1" fill="#000" />
<g fill="#c8c8c8"><rect x="53" y="326" width="1" height="1"/><rect x="61" y="326" width="1" height="1"/><rect x="69" y="326" width="1" height="1"/><rect x="77" y="326" width="1" height="1"/><rect x="85" y="326" width="1" height="1"/><rect x="93" y="326" width="1" height="1"/><rect x="101" y="326" width="1" height="1"/><rect x="109" y="326" width="1" height="1"/><rect x="117" y="326" width="1" height="1"/><rect x="125" y="326" width="1" height="1"/><rect x="133" y="326" width="1" height="1"/><rect x="141" y="326" width="1" height="1"/><rect x="149" y="326" width="1" height="1"/><rect x="157" y="326" width="1" height="1"/><rect x="165" y="326" width="1" height="1"/><rect x="173" y="326" width="1" height="1"/><rect x="181" y="326" width="1" height="1"/><rect x="189" y="326" width="1" height="1"/><rect x="197" y="326" width="1" height="1"/><rect x="205" y="326" width="1" height="1"/><rect x="213" y="326" width="1" height="1"/><rect x="221" y="326" width="1" height="1"/><rect x="229" y="326" width="1" height="1"/><rect x="237" y="326" width="1" height="1"/><rect x="245" y="326" width="1" height="1"/><rect x="253" y="326" width="1" height="1"/><rect x="261" y="326" width="1" height="1"/><rect x="269" y="326" width="1" height="1"/><rect x="277" y="326" width="1" height="1"/><rect x="285" y="326" width="1" height="1"/><rect x="293" y="326" width="1" height="1"/><rect x="301" y="326" width="1" height="1"/><rect x="309" y="326" width="1" height="1"/><rect x="317" y="326" width="1" height="1"/><rect x="325" y="326" width="1" height="1"/><rect x="333" y="326" width="1" height="1"/><rect x="341" y="326" width="1" height="1"/><rect x="349" y="326" width="1" height="1"/><rect x="357" y="326" width="1" height="1"/><rect x="365" y="326" width="1" height="1"/><rect x="373" y="326" width="1" height="1"/><rect x="381" y="326" width="1" height="1"/><rect x="389" y="326" width="1" height="1"/><rect x="397" y="326" width="1" height="1"/><rect x="405" y="326" width="1" height="1"/><rect x="413" y="326" width="1" height="1"/><rect x="421" y="326" width="1" height="1"/><rect x="429" y="326" width="1" height="1"/><rect x="437" y="326" width="1" height="1"/><rect x="445" y="326" width="1" height="1"/><rect x="453" y="326" width="1" height="1"/><rect x="461" y="326" width="1" height="1"/><rect x="469" y="326" width="1" height="1"/><rect x="477" y="326" width="1" height="1"/><rect x="485" y="326" width="1" height="1"/><rect x="493" y="326" width="1" height="1"/><rect x="501" y="326" width="1" height="1"/><rect x="509" y="326" width="1" height="1"/><rect x="517" y="326" width="1" height="1"/><rect x="525" y="326" width="1" height="1"/><rect x="533" y="326" width="1" height="1"/><rect x="541" y="326" width="1" height="1"/><rect x="549" y="326" width="1" height="1"/><rect x="557" y="326" width="1" height="1"/><rect x="565" y="326" width="1" height="1"/><rect x="573" y="326" width="1" height="1"/><rect x="581" y="326" width="1" height="1"/><rect x="589" y="326" width="1" height="1"/><rect x="597" y="326" width="1" height="1"/><rect x="605" y="326" width="1" height="1"/><rect x="613" y="326" width="1" height="1"/><rect x="621" y="326" width="1" height="1"/><rect x="629" y="326" width="1" height="1"/><rect x="637" y="326" width="1" height="1"/><rect x="645" y="326" width="1" height="1"/><rect x="653" y="326" width="1" height="1"/><rect x="661" y="326" width="1" height="1"/><rect x="669" y="326" width="1" height="1"/><rect x="677" y="326" width="1" height="1"/><rect x="685" y="326" width="1" height="1"/><rect x="693" y="326" width="1" height="1"/><rect x="701" y="326" width="1" height="1"/><rect x="709" y="326" width="1" height="1"/><rect x="717" y="326" width="1" height="1"/><rect x="725" y="326" width="1" height="1"/><rect x="733" y="326" width="1" height="1"/><rect x="741" y="326" width="1" height="1"/><rect x="749" y="326" width="1" height="1"/><rect x="757" y="326" width="1" height="1"/><rect x="765" y="326" width="1" height="1"/><rect x="773" y="326" width="1" height="1"/><rect x="781" y="326" width="1" height="1"/><rect x="789" y="326" width="1" height="1"/><rect x="797" y="326" width="1" height="1"/><rect x="805" y="326" width="1" height="1"/><rect x="813" y="326" width="1" height="1"/><rect x="821" y="326" width="1" height="1"/><rect x="829" y="326" width="1" height="1"/><rect x="837" y="326" width="1" height="1"/><rect x="845" y="326" width="1" height="1"/><rect x="853" y="326" width="1" height="1"/><rect x="861" y="326" width="1" height="1"/><rect x="869" y="326" width="1" height="1"/><rect x="877" y="326" width="1" height="1"/><rect x="885" y="326" width="1" height="1"/><rect x="893" y="326" width="1" height="1"/><rect x="901" y="326" width="1" height="1"/><rect x="909" y="326" width="1" height="1"/><rect x="917" y="326" width="1" height="1"/><rect x="925" y="326" width="1" height="1"/><rect x="933" y="326" width="1" height="1"/><rect x="941" y="326" width="1" height="1"/><rect x="949" y="326" width="1" height="1"/><rect x="957" y="326" width="1" height="1"/><rect x="965" y="326" width="1" height="1"/><rect x="973" y="326" width="1" height="1"/></g>
<rect x="12" y="394" width="40" height="1" fill="#000" />
<g fill="#c8c8c8"><rect x="53" y="394" width="1" height="1"/><rect x="61" y="394" width="1" height="1"/><rect x="69" y="394" width="1" height="1"/><rect x="77" y="394" width="1" height="1"/><rect x="85" y="394" width="1" height="1"/><rect x="93" y="394" width="1" height="1"/><rect x="101" y="394" width="1" height="1"/><rect x="109" y="394" width="1" height="1"/><rect x="117" y="394" width="1" height="1"/><rect x="125" y="394" width="1" height="1"/><rect x="133" y="394" width="1" height="1"/><rect x="141" y="394" width="1" height="1"/><rect x="149" y="394" width="1" height="1"/><rect x="157" y="394" width="1" height="1"/><rect x="165" y="394" width="1" height="1"/><rect x="173" y="394" width="1" height="1"/><rect x="181" y="394" width="1" height="1"/><rect x="189" y="394" width="1" height="1"/><rect x="197" y="394" width="1" height="1"/><rect x="205" y="394" width="1" height="1"/><rect x="213" y="394" width="1" height="1"/><rect x="221" y="394" width="1" height="1"/><rect x="229" y="394" width="1" height="1"/><rect x="237" y="394" width="1" height="1"/><rect x="245" y="394" width="1" height="1"/><rect x="253" y="394" width="1" height="1"/><rect x="261" y="394" width="1" height="1"/><rect x="269" y="394" width="1" height="1"/><rect x="277" y="394" width="1" height="1"/><rect x="285" y="394" width="1" height="1"/><rect x="293" y="394" width="1" height="1"/><rect x="301" y="394" width="1" height="1"/><rect x="309" y="394" width="1" height="1"/><rect x="317" y="394" width="1" height="1"/><rect x="325" y="394" width="1" height="1"/><rect x="333" y="394" width="1" height="1"/><rect x="341" y="394" width="1" height="1"/><rect x="349" y="394" width="1" height="1"/><rect x="357" y="394" width="1" height="1"/><rect x="365" y="394" width="1" height="1"/><rect x="373" y="394" width="1" height="1"/><rect x="381" y="394" width="1" height="1"/><rect x="389" y="394" width="1" height="1"/><rect x="397" y="394" width="1" height="1"/><rect x="405" y="394" width="1" height="1"/><rect x="413" y="394" width="1" height="1"/><rect x="421" y="394" width="1" height="1"/><rect x="429" y="394" width="1" height="1"/><rect x="437" y="394" width="1" height="1"/><rect x="445" y="394" width="1" height="1"/><rect x="453" y="394" width="1" height="1"/><rect x="461" y="394" width="1" height="1"/><rect x="469" y="394" width="1" height="1"/><rect x="477" y="394" width="1" height="1"/><rect x="485" y="394" width="1" height="1"/><rect x="493" y="394" width="1" height="1"/><rect x="501" y="394" width="1" height="1"/><rect x="509" y="394" width="1" height="1"/><rect x="517" y="394" width="1" height="1"/><rect x="525" y="394" width="1" height="1"/><rect x="533" y="394" width="1" height="1"/><rect x="541" y="394" width="1" height="1"/><rect x="549" y="394" width="1" height="1"/><rect x="557" y="394" width="1" height="1"/><rect x="565" y="394" width="1" height="1"/><rect x="573" y="394" width="1" height="1"/><rect x="581" y="394" width="1" height="1"/><rect x="589" y="394" width="1" height="1"/><rect x="597" y="394" width="1" height="1"/><rect x="605" y="394" width="1" height="1"/><rect x="613" y="394" width="1" height="1"/><rect x="621" y="394" width="1" height="1"/><rect x="629" y="394" width="1" height="1"/><rect x="637" y="394" width="1" height="1"/><rect x="645" y="394" width="1" height="1"/><rect x="653" y="394" width="1" height="1"/><rect x="661" y="394" width="1" height="1"/><rect x="669" y="394" width="1" height="1"/><rect x="677" y="394" width="1" height="1"/><rect x="685" y="394" width="1" height="1"/><rect x="693" y="394" width="1" height="1"/><rect x="701" y="394" width="1" height="1"/><rect x="709" y="394" width="1" height="1"/><rect x="717" y="394" width="1" height="1"/><rect x="725" y="394" width="1" height="1"/><rect x="733" y="394" width="1" height="1"/><rect x="741" y="394" width="1" height="1"/><rect x="749" y="394" width="1" height="1"/><rect x="757" y="394" width="1" height="1"/><rect x="765" y="394" width="1" height="1"/><rect x="773" y="394" width="1" height="1"/><rect x="781" y="394" width="1" height="1"/><rect x="789" y="394" width="1" height="1"/><rect x="797" y="394" width="1" height="1"/><rect x="805" y="394" width="1" height="1"/><rect x="813" y="394" width="1" height="1"/><rect x="821" y="394" width="1" height="1"/><rect x="829" y="394" width="1" height="1"/><rect x="837" y="394" width="1" height="1"/><rect x="845" y="394" width="1" height="1"/><rect x="853" y="394" width="1" height="1"/><rect x="861" y="394" width="1" height="1"/><rect x="869" y="394" width="1" height="1"/><rect x="877" y="394" width="1" height="1"/><rect x="885" y="394" width="1" height="1"/><rect x="893" y="394" width="1" height="1"/><rect x="901" y="394" width="1" height="1"/><rect x="909" y="394" width="1" height="1"/><rect x="917" y="394" width="1" height="1"/><rect x="925" y="394" width="1" height="1"/><rect x="933" y="394" width="1" height="1"/><rect x="941" y="394" width="1" height="1"/><rect x="949" y="394" width="1" height="1"/><rect x="957" y="394" width="1" height="1"/><rect x="965" y="394" width="1" height="1"/><rect x="973" y="394" width="1" height="1"/></g>
<rect x="12" y="461" width="40" height="1" fill="#000" />
<g fill="#c8c8c8"><rect x="53" y="461" width="1" height="1"/><rect x="61" y="461" width="1" height="1"/><rect x="69" y="461" width="1" height="1"/><rect x="77" y="461" width="1" height="1"/><rect x="85" y="461" width="1" height="1"/><rect x="93" y="461" width="1" height="1"/><rect x="101" y="461" width="1" height="1"/><rect x="109" y="461" width="1" height="1"/><rect x="117" y="461" width="1" height="1"/><rect x="125" y="461" width="1" height="1"/><rect x="133" y="461" width="1" height="1"/><rect x="141" y="461" width="1" height="1"/><rect x="149" y="461" width="1" height="1"/><rect x="157" y="461" width="1" height="1"/><rect x="165" y="461" width="1" height="1"/><rect x="173" y="461" width="1" height="1"/><rect x="181" y="461" width="1" height="1"/><rect x="189" y="461" width="1" height="1"/><rect x="197" y="461" width="1" height="1"/><rect x="205" y="461" width="1" height="1"/><rect x="213" y="461" width="1" height="1"/><rect x="221" y="461" width="1" height="1"/><rect x="229" y="461" width="1" height="1"/><rect x="237" y="461" width="1" height="1"/><rect x="245" y="461" width="1" height="1"/><rect x="253" y="461" width="1" height="1"/><rect x="261" y="461" width="1" height="1"/><rect x="269" y="461" width="1" height="1"/><rect x="277" y="461" width="1" height="1"/><rect x="285" y="461" width="1" height="1"/><rect x="293" y="461" width="1" height="1"/><rect x="301" y="461" width="1" height="1"/><rect x="309" y="461" width="1" height="1"/><rect x="317" y="461" width="1" height="1"/><rect x="325" y="461" width="1" height="1"/><rect x="333" y="461" width="1" height="1"/><rect x="341" y="461" width="1" height="1"/><rect x="349" y="461" width="1" height="1"/><rect x="357" y="461" width="1" height="1"/><rect x="365" y="461" width="1" height="1"/><rect x="373" y="461" width="1" height="1"/><rect x="381" y="461" width="1" height="1"/><rect x="389" y="461" width="1" height="1"/><rect x="397" y="461" width="1" height="1"/><rect x="405" y="461" width="1" height="1"/><rect x="413" y="461" width="1" height="1"/><rect x="421" y="461" width="1" height="1"/><rect x="429" y="461" width="1" height="1"/><rect x="437" y="461" width="1" height="1"/><rect x="445" y="461" width="1" height="1"/><rect x="453" y="461" width="1" height="1"/><rect x="461" y="461" width="1" height="1"/><rect x="469" y="461" width="1" height="1"/><rect x="477" y="461" width="1" height="1"/><rect x="485" y="461" width="1" height="1"/><rect x="493" y="461" width="1" height="1"/><rect x="501" y="461" width="1" height="1"/><rect x="509" y="461" width="1" height="1"/><rect x="517" y="461" width="1" height="1"/><rect x="525" y="461" width="1" height="1"/><rect x="533" y="461" width="1" height="1"/><rect x="541" y="461" width="1" height="1"/><rect x="549" y="461" width="1" height="1"/><rect x="557" y="461" width="1" height="1"/><rect x="565" y="461" width="1" height="1"/><rect x="573" y="461" width="1" height="1"/><rect x="581" y="461" width="1" height="1"/><rect x="589" y="461" width="1" height="1"/><rect x="597" y="461" width="1" height="1"/><rect x="605" y="461" width="1" height="1"/><rect x="613" y="461" width="1" height="1"/><rect x="621" y="461" width="1" height="1"/><rect x="629" y="461" width="1" height="1"/><rect x="637" y="461" width="1" height="1"/><rect x="645" y="461" width="1" height="1"/><rect x="653" y="461" width="1" height="1"/><rect x="661" y="461" width="1" height="1"/><rect x="669" y="461" width="1" height="1"/><rect x="677" y="461" width="1" height="1"/><rect x="685" y="461" width="1" height="1"/><rect x="693" y="461" width="1" height="1"/><rect x="701" y="461" width="1" height="1"/><rect x="709" y="461" width="1" height="1"/><rect x="717" y="461" width="1" height="1"/><rect x="725" y="461" width="1" height="1"/><rect x="733" y="461" width="1" height="1"/><rect x="741" y="461" width="1" height="1"/><rect x="749" y="461" width="1" height="1"/><rect x="757" y="461" width="1" height="1"/><rect x="765" y="461" width="1" height="1"/><rect x="773" y="461" width="1" height="1"/><rect x="781" y="461" width="1" height="1"/><rect x="789" y="461" width="1" height="1"/><rect x="797" y="461" width="1" height="1"/><rect x="805" y="461" width="1" height="1"/><rect x="813" y="461" width="1" height="1"/><rect x="821" y="461" width="1" height="1"/><rect x="829" y="461" width="1" height="1"/><rect x="837" y="461" width="1" height="1"/><rect x="845" y="461" width="1" height="1"/><rect x="853" y="461" width="1" height="1"/><rect x="861" y="461" width="1" height="1"/><rect x="869" y="461" width="1" height="1"/><rect x="877" y="461" width="1" height="1"/><rect x="885" y="461" width="1" height="1"/><rect x="893" y="461" width="1" height="1"/><rect x="901" y="461" width="1" height="1"/><rect x="909" y="461" width="1" height="1"/><rect x="917" y="461" width="1" height="1"/><rect x="925" y="461" width="1" height="1"/><rect x="933" y="461" width="1" height="1"/><rect x="941" y="461" width="1" height="1"/><rect x="949" y="461" width="1" height="1"/><rect x="957" y="461" width="1" height="1"/><rect x="965" y="461" width="1" height="1"/><rect x="973" y="461" width="1" height="1"/></g>
<rect x="12" y="528" width="40" height="1" fill="#000" />
<g fill="#c8c8c8"><rect x="53" y="528" width="1" height="1"/><rect x="61" y="528" width="1" height="1"/><rect x="69" y="528" width="1" height="1"/><rect x="77" y="528" width="1" height="1"/><rect x="85" y="528" width="1" height="1"/><rect x="93" y="528" width="1" height="1"/><rect x="101" y="528" width="1" height="1"/><rect x="109" y="528" width="1" height="1"/><rect x="117" y="528" width="1" height="1"/><rect x="125" y="528" width="1" height="1"/><rect x="133" y="528" width="1" height="1"/><rect x="141" y="528" width="1" height="1"/><rect x="149" y="528" width="1" height="1"/><rect x="157" y="528" width="1" height="1"/><rect x="165" y="528" width="1" height="1"/><rect x="173" y="528" width="1" height="1"/><rect x="181" y="528" width="1" height="1"/><rect x="189" y="528" width="1" height="1"/><rect x="197" y="528" width="1" height="1"/><rect x="205" y="528" width="1" height="1"/><rect x="213" y="528" width="1" height="1"/><rect x="221" y="528" width="1" height="1"/><rect x="229" y="528" width="1" height="1"/><rect x="237" y="528" width="1" height="1"/><rect x="245" y="528" width="1" height="1"/><rect x="253" y="528" width="1" height="1"/><rect x="261" y="528" width="1" height="1"/><rect x="269" y="528" width="1" height="1"/><rect x="277" y="528" width="1" height="1"/><rect x="285" y="528" width="1" height="1"/><rect x="293" y="528" width="1" height="1"/><rect x="301" y="528" width="1" height="1"/><rect x="309" y="528" width="1" height="1"/><rect x="317" y="528" width="1" height="1"/><rect x="325" y="528" width="1" height="1"/><rect x="333" y="528" width="1" height="1"/><rect x="341" y="528" width="1" height="1"/><rect x="349" y="528" width="1" height="1"/><rect x="357" y="528" width="1" height="1"/><rect x="365" y="528" width="1" height="1"/><rect x="373" y="528" width="1" height="1"/><rect x="381" y="528" width="1" height="1"/><rect x="389" y="528" width="1" height="1"/><rect x="397" y="528" width="1" height="1"/><rect x="405" y="528" width="1" height="1"/><rect x="413" y="528" width="1" height="1"/><rect x="421" y="528" width="1" height="1"/><rect x="429" y="528" width="1" height="1"/><rect x="437" y="528" width="1" height="1"/><rect x="445" y="528" width="1" height="1"/><rect x="453" y="528" width="1" height="1"/><rect x="461" y="528" width="1" height="1"/><rect x="469" y="528" width="1" height="1"/><rect x="477" y="528" width="1" height="1"/><rect x="485" y="528" width="1" height="1"/><rect x="493" y="528" width="1" height="1"/><rect x="501" y="528" width="1" height="1"/><rect x="509" y="528" width="1" height="1"/><rect x="517" y="528" width="1" height="1"/><rect x="525" y="528" width="1" height="1"/><rect x="533" y="528" width="1" height="1"/><rect x="541" y="528" width="1" height="1"/><rect x="549" y="528" width="1" height="1"/><rect x="557" y="528" width="1" height="1"/><rect x="565" y="528" width="1" height="1"/><rect x="573" y="528" width="1" height="1"/><rect x="581" y="528" width="1" height="1"/><rect x="589" y="528" width="1" height="1"/><rect x="597" y="528" width="1" height="1"/><rect x="605" y="528" width="1" height="1"/><rect x="613" y="528" width="1" height="1"/><rect x="621" y="528" width="1" height="1"/><rect x="629" y="528" width="1" height="1"/><rect x="637" y="528" width="1" height="1"/><rect x="645" y="528" width="1" height="1"/><rect x="653" y="528" width="1" height="1"/><rect x="661" y="528" width="1" height="1"/><rect x="669" y="528" width="1" height="1"/><rect x="677" y="528" width="1" height="1"/><rect x="685" y="528" width="1" height="1"/><rect x="693" y="528" width="1" height="1"/><rect x="701" y="528" width="1" height="1"/><rect x="709" y="528" width="1" height="1"/><rect x="717" y="528" width="1" height="1"/><rect x="725" y="528" width="1" height="1"/><rect x="733" y="528" width="1" height="1"/><rect x="741" y="528" width="1" height="1"/><rect x="749" y="528" width="1" height="1"/><rect x="757" y="528" width="1" height="1"/><rect x="765" y="528" width="1" height="1"/><rect x="773" y="528" width="1" height="1"/><rect x="781" y="528" width="1" height="1"/><rect x="789" y="528" width="1" height="1"/><rect x="797" y="528" width="1" height="1"/><rect x="805" y="528" width="1" height="1"/><rect x="813" y="528" width="1" height="1"/><rect x="821" y="528" width="1" height="1"/><rect x="829" y="528" width="1" height="1"/><rect x="837" y="528" width="1" height="1"/><rect x="845" y="528" width="1" height="1"/><rect x="853" y="528" width="1" height="1"/><rect x="861" y="528" width="1" height="1"/><rect x="869" y="528" width="1" height="1"/><rect x="877" y="528" width="1" height="1"/><rect x="885" y="528" width="1" height="1"/><rect x="893" y="528" width="1" height="1"/><rect x="901" y="528" width="1" height="1"/><rect x="909" y="528" width="1" height="1"/><rect x="917" y="528" width="1" height="1"/><rect x="925" y="528" width="1" height="1"/><rect x="933" y="528" width="1" height="1"/><rect x="941" y="528" width="1" height="1"/><rect x="949" y="528" width="1" height="1"/><rect x="957" y="528" width="1" height="1"/><rect x="965" y="528" width="1" height="1"/><rect x="973" y="528" width="1" height="1"/></g>
<rect x="12" y="596" width="40" height="1" fill="#000" />
<g fill="#c8c8c8"><rect x="53" y="596" width="1" height="1"/><rect x="61" y="596" width="1" height="1"/><rect x="69" y="596" width="1" height="1"/><rect x="77" y="596" width="1" height="1"/><rect x="85" y="596" width="1" height="1"/><rect x="93" y="596" width="1" height="1"/><rect x="101" y="596" width="1" height="1"/><rect x="109" y="596" width="1" height="1"/><rect x="117" y="596" width="1" height="1"/><rect x="125" y="596" width="1" height="1"/><rect x="133" y="596" width="1" height="1"/><rect x="141" y="596" width="1" height="1"/><rect x="149" y="596" width="1" height="1"/><rect x="157" y="596" width="1" height="1"/><rect x="165" y="596" width="1" height="1"/><rect x="173" y="596" width="1" height="1"/><rect x="181" y="596" width="1" height="1"/><rect x="189" y="596" width="1" height="1"/><rect x="197" y="596" width="1" height="1"/><rect x="205" y="596" width="1" height="1"/><rect x="213" y="596" width="1" height="1"/><rect x="221" y="596" width="1" height="1"/><rect x="229" y="596" width="1" height="1"/><rect x="237" y="596" width="1" height="1"/><rect x="245" y="596" width="1" height="1"/><rect x="253" y="596" width="1" height="1"/><rect x="261" y="596" width="1" height="1"/><rect x="269" y="596" width="1" height="1"/><rect x="277" y="596" width="1" height="1"/><rect x="285" y="596" width="1" height="1"/><rect x="293" y="596" width="1" height="1"/><rect x="301" y="596" width="1" height="1"/><rect x="309" y="596" width="1" height="1"/><rect x="317" y="596" width="1" height="1"/><rect x="325" y="596" width="1" height="1"/><rect x="333" y="596" width="1" height="1"/><rect x="341" y="596" width="1" height="1"/><rect x="349" y="596" width="1" height="1"/><rect x="357" y="596" width="1" height="1"/><rect x="365" y="596" width="1" height="1"/><rect x="373" y="596" width="1" height="1"/><rect x="381" y="596" width="1" height="1"/><rect x="389" y="596" width="1" height="1"/><rect x="397" y="596" width="1" height="1"/><rect x="405" y="596" width="1" height="1"/><rect x="413" y="596" width="1" height="1"/><rect x="421" y="596" width="1" height="1"/><rect x="429" y="596" width="1" height="1"/><rect x="437" y="596" width="1" height="1"/><rect x="445" y="596" width="1" height="1"/><rect x="453" y="596" width="1" height="1"/><rect x="461" y="596" width="1" height="1"/><rect x="469" y="596" width="1" height="1"/><rect x="477" y="596" width="1" height="1"/><rect x="485" y="596" width="1" height="1"/><rect x="493" y="596" width="1" height="1"/><rect x="501" y="596" width="1" height="1"/><rect x="509" y="596" width="1" height="1"/><rect x="517" y="596" width="1" height="1"/><rect x="525" y="596" width="1" height="1"/><rect x="533" y="596" width="1" height="1"/><rect x="541" y="596" width="1" height="1"/><rect x="549" y="596" width="1" height="1"/><rect x="557" y="596" width="1" height="1"/><rect x="565" y="596" width="1" height="1"/><rect x="573" y="596" width="1" height="1"/><rect x="581" y="596" width="1" height="1"/><rect x="589" y="596" width="1" height="1"/><rect x="597" y="596" width="1" height="1"/><rect x="605" y="596" width="1" height="1"/><rect x="613" y="596" width="1" height="1"/><rect x="621" y="596" width="1" height="1"/><rect x="629" y="596" width="1" height="1"/><rect x="637" y="596" width="1" height="1"/><rect x="645" y="596" width="1" height="1"/><rect x="653" y="596" width="1" height="1"/><rect x="661" y="596" width="1" height="1"/><rect x="669" y="596" width="1" height="1"/><rect x="677" y="596" width="1" height="1"/><rect x="685" y="596" width="1" height="1"/><rect x="693" y="596" width="1" height="1"/><rect x="701" y="596" width="1" height="1"/><rect x="709" y="596" width="1" height="1"/><rect x="717" y="596" width="1" height="1"/><rect x="725" y="596" width="1" height="1"/><rect x="733" y="596" width="1" height="1"/><rect x="741" y="596" width="1" height="1"/><rect x="749" y="596" width="1" height="1"/><rect x="757" y="596" width="1" height="1"/><rect x="765" y="596" width="1" height="1"/><rect x="773" y="596" width="1" height="1"/><rect x="781" y="596" width="1" height="1"/><rect x="789" y="596" width="1" height="1"/><rect x="797" y="596" width="1" height="1"/><rect x="805" y="596" width="1" height="1"/><rect x="813" y="596" width="1" height="1"/><rect x="821" y="596" width="1" height="1"/><rect x="829" y="596" width="1" height="1"/><rect x="837" y="596" width="1" height="1"/><rect x="845" y="596" width="1" height="1"/><rect x="853" y="596" width="1" height="1"/><rect x="861" y="596" width="1" height="1"/><rect x="869" y="596" width="1" height="1"/><rect x="877" y="596" width="1" height="1"/><rect x="885" y="596" width="1" height="1"/><rect x="893" y="596" width="1" height="1"/><rect x="901" y="596" width="1" height="1"/><rect x="909" y="596" width="1" height="1"/><rect x="917" y="596" width="1" height="1"/><rect x="925" y="596" width="1" height="1"/><rect x="933" y="596" width="1" height="1"/><rect x="941" y="596" width="1" height="1"/><rect x="949" y="596" width="1" height="1"/><rect x="957" y="596" width="1" height="1"/><rect x="965" y="596" width="1" height="1"/><rect x="973" y="596" width="1" height="1"/></g>
<rect x="12" y="663" width="40" height="1" fill="#000" />
<g fill="#c8c8c8"><rect x="53" y="663" width="1" height="1"/><rect x="61" y="663" width="1" height="1"/><rect x="69" y="663" width="1" height="1"/><rect x="77" y="663" width="1" height="1"/><rect x="85" y="663" width="1" height="1"/><rect x="93" y="663" width="1" height="1"/><rect x="101" y="663" width="1" height="1"/><rect x="109" y="663" width="1" height="1"/><rect x="117" y="663" width="1" height="1"/><rect x="125" y="663" width="1" height="1"/><rect x="133" y="663" width="1" height="1"/><rect x="141" y="663" width="1" height="1"/><rect x="149" y="663" width="1" height="1"/><rect x="157" y="663" width="1" height="1"/><rect x="165" y="663" width="1" height="1"/><rect x="173" y="663" width="1" height="1"/><rect x="181" y="663" width="1" height="1"/><rect x="189" y="663" width="1" height="1"/><rect x="197" y="663" width="1" height="1"/><rect x="205" y="663" width="1" height="1"/><rect x="213" y="663" width="1" height="1"/><rect x="221" y="663" width="1" height="1"/><rect x="229" y="663" width="1" height="1"/><rect x="237" y="663" width="1" height="1"/><rect x="245" y="663" width="1" height="1"/><rect x="253" y="663" width="1" height="1"/><rect x="261" y="663" width="1" height="1"/><rect x="269" y="663" width="1" height="1"/><rect x="277" y="663" width="1" height="1"/><rect x="285" y="663" width="1" height="1"/><rect x="293" y="663" width="1" height="1"/><rect x="301" y="663" width="1" height="1"/><rect x="309" y="663" width="1" height="1"/><rect x="317" y="663" width="1" height="1"/><rect x="325" y="663" width="1" height="1"/><rect x="333" y="663" width="1" height="1"/><rect x="341" y="663" width="1" height="1"/><rect x="349" y="663" width="1" height="1"/><rect x="357" y="663" width="1" height="1"/><rect x="365" y="663" width="1" height="1"/><rect x="373" y="663" width="1" height="1"/><rect x="381" y="663" width="1" height="1"/><rect x="389" y="663" width="1" height="1"/><rect x="397" y="663" width="1" height="1"/><rect x="405" y="663" width="1" height="1"/><rect x="413" y="663" width="1" height="1"/><rect x="421" y="663" width="1" height="1"/><rect x="429" y="663" width="1" height="1"/><rect x="437" y="663" width="1" height="1"/><rect x="445" y="663" width="1" height="1"/><rect x="453" y="663" width="1" height="1"/><rect x="461" y="663" width="1" height="1"/><rect x="469" y="663" width="1" height="1"/><rect x="477" y="663" width="1" height="1"/><rect x="485" y="663" width="1" height="1"/><rect x="493" y="663" width="1" height="1"/><rect x="501" y="663" width="1" height="1"/><rect x="509" y="663" width="1" height="1"/><rect x="517" y="663" width="1" height="1"/><rect x="525" y="663" width="1" height="1"/><rect x="533" y="663" width="1" height="1"/><rect x="541" y="663" width="1" height="1"/><rect x="549" y="663" width="1" height="1"/><rect x="557" y="663" width="1" height="1"/><rect x="565" y="663" width="1" height="1"/><rect x="573" y="663" width="1" height="1"/><rect x="581" y="663" width="1" height="1"/><rect x="589" y="663" width="1" height="1"/><rect x="597" y="663" width="1" height="1"/><rect x="605" y="663" width="1" height="1"/><rect x="613" y="663" width="1" height="1"/><rect x="621" y="663" width="1" height="1"/><rect x="629" y="663" width="1" height="1"/><rect x="637" y="663" width="1" height="1"/><rect x="645" y="663" width="1" height="1"/><rect x="653" y="663" width="1" height="1"/><rect x="661" y="663" width="1" height="1"/><rect x="669" y="663" width="1" height="1"/><rect x="677" y="663" width="1" height="1"/><rect x="685" y="663" width="1" height="1"/><rect x="693" y="663" width="1" height="1"/><rect x="701" y="663" width="1" height="1"/><rect x="709" y="663" width="1" height="1"/><rect x="717" y="663" width="1" height="1"/><rect x="725" y="663" width="1" height="1"/><rect x="733" y="663" width="1" height="1"/><rect x="741" y="663" width="1" height="1"/><rect x="749" y="663" width="1" height="1"/><rect x="757" y="663" width="1" height="1"/><rect x="765" y="663" width="1" height="1"/><rect x="773" y="663" width="1" height="1"/><rect x="781" y="663" width="1" height="1"/><rect x="789" y="663" width="1" height="1"/><rect x="797" y="663" width="1" height="1"/><rect x="805" y="663" width="1" height="1"/><rect x="813" y="663" width="1" height="1"/><rect x="821" y="663" width="1" height="1"/><rect x="829" y="663" width="1" height="1"/><rect x="837" y="663" width="1" height="1"/><rect x="845" y="663" width="1" height="1"/><rect x="853" y="663" width="1" height="1"/><rect x="861" y="663" width="1" height="1"/><rect x="869" y="663" width="1" height="1"/><rect x="877" y="663" width="1" height="1"/><rect x="885" y="663" width="1" height="1"/><rect x="893" y="663" width="1" height="1"/><rect x="901" y="663" width="1" height="1"/><rect x="909" y="663" width="1" height="1"/><rect x="917" y="663" width="1" height="1"/><rect x="925" y="663" width="1" height="1"/><rect x="933" y="663" width="1" height="1"/><rect x="941" y="663" width="1" height="1"/><rect x="949" y="663" width="1" height="1"/><rect x="957" y="663" width="1" height="1"/><rect x="965" y="663" width="1" height="1"/><rect x="973" y="663" width="1" height="1"/></g>
<rect x="12" y="730" width="40" height="1" fill="#000" />
<g fill="#c8c8c8"><rect x="53" y="730" width="1" height="1"/><rect x="61" y="730" width="1" height="1"/><rect x="69" y="730" width="1" height="1"/><rect x="77" y="730" width="1" height="1"/><rect x="85" y="730" width="1" height="1"/><rect x="93" y="730" width="1" height="1"/><rect x="101" y="730" width="1" height="1"/><rect x="109" y="730" width="1" height="1"/><rect x="117" y="730" width="1" height="1"/><rect x="125" y="730" width="1" height="1"/><rect x="133" y="730" width="1" height="1"/><rect x="141" y="730" width="1" height="1"/><rect x="149" y="730" width="1" height="1"/><rect x="157" y="730" width="1" height="1"/><rect x="165" y="730" width="1" height="1"/><rect x="173" y="730" width="1" height="1"/><rect x="181" y="730" width="1" height="1"/><rect x="189" y="730" width="1" height="1"/><rect x="197" y="730" width="1" height="1"/><rect x="205" y="730" width="1" height="1"/><rect x="213" y="730" width="1" height="1"/><rect x="221" y="730" width="1" height="1"/><rect x="229" y="730" width="1" height="1"/><rect x="237" y="730" width="1" height="1"/><rect x="245" y="730" width="1" height="1"/><rect x="253" y="730" width="1" height="1"/><rect x="261" y="730" width="1" height="1"/><rect x="269" y="730" width="1" height="1"/><rect x="277" y="730" width="1" height="1"/><rect x="285" y="730" width="1" height="1"/><rect x="293" y="730" width="1" height="1"/><rect x="301" y="730" width="1" height="1"/><rect x="309" y="730" width="1" height="1"/><rect x="317" y="730" width="1" height="1"/><rect x="325" y="730" width="1" height="1"/><rect x="333" y="730" width="1" height="1"/><rect x="341" y="730" width="1" height="1"/><rect x="349" y="730" width="1" height="1"/><rect x="357" y="730" width="1" height="1"/><rect x="365" y="730" width="1" height="1"/><rect x="373" y="730" width="1" height="1"/><rect x="381" y="730" width="1" height="1"/><rect x="389" y="730" width="1" height="1"/><rect x="397" y="730" width="1" height="1"/><rect x="405" y="730" width="1" height="1"/><rect x="413" y="730" width="1" height="1"/><rect x="421" y="730" width="1" height="1"/><rect x="429" y="730" width="1" height="1"/><rect x="437" y="730" width="1" height="1"/><rect x="445" y="730" width="1" height="1"/><rect x="453" y="730" width="1" height="1"/><rect x="461" y="730" width="1" height="1"/><rect x="469" y="730" width="1" height="1"/><rect x="477" y="730" width="1" height="1"/><rect x="485" y="730" width="1" height="1"/><rect x="493" y="730" width="1" height="1"/><rect x="501" y="730" width="1" height="1"/><rect x="509" y="730" width="1" height="1"/><rect x="517" y="730" width="1" height="1"/><rect x="525" y="730" width="1" height="1"/><rect x="533" y="730" width="1" height="1"/><rect x="541" y="730" width="1" height="1"/><rect x="549" y="730" width="1" height="1"/><rect x="557" y="730" width="1" height="1"/><rect x="565" y="730" width="1" height="1"/><rect x="573" y="730" width="1" height="1"/><rect x="581" y="730" width="1" height="1"/><rect x="589" y="730" width="1" height="1"/><rect x="597" y="730" width="1" height="1"/><rect x="605" y="730" width="1" height="1"/><rect x="613" y="730" width="1" height="1"/><rect x="621" y="730" width="1" height="1"/><rect x="629" y="730" width="1" height="1"/><rect x="637" y="730" width="1" height="1"/><rect x="645" y="730" width="1" height="1"/><rect x="653" y="730" width="1" height="1"/><rect x="661" y="730" width="1" height="1"/><rect x="669" y="730" width="1" height="1"/><rect x="677" y="730" width="1" height="1"/><rect x="685" y="730" width="1" height="1"/><rect x="693" y="730" width="1" height="1"/><rect x="701" y="730" width="1" height="1"/><rect x="709" y="730" width="1" height="1"/><rect x="717" y="730" width="1" height="1"/><rect x="725" y="730" width="1" height="1"/><rect x="733" y="730" width="1" height="1"/><rect x="741" y="730" width="1" height="1"/><rect x="749" y="730" width="1" height="1"/><rect x="757" y="730" width="1" height="1"/><rect x="765" y="730" width="1" height="1"/><rect x="773" y="730" width="1" height="1"/><rect x="781" y="730" width="1" height="1"/><rect x="789" y="730" width="1" height="1"/><rect x="797" y="730" width="1" height="1"/><rect x="805" y="730" width="1" height="1"/><rect x="813" y="730" width="1" height="1"/><rect x="821" y="730" width="1" height="1"/><rect x="829" y="730" width="1" height="1"/><rect x="837" y="730" width="1" height="1"/><rect x="845" y="730" width="1" height="1"/><rect x="853" y="730" width="1" height="1"/><rect x="861" y="730" width="1" height="1"/><rect x="869" y="730" width="1" height="1"/><rect x="877" y="730" width="1" height="1"/><rect x="885" y="730" width="1" height="1"/><rect x="893" y="730" width="1" height="1"/><rect x="901" y="730" width="1" height="1"/><rect x="909" y="730" width="1" height="1"/><rect x="917" y="730" width="1" height="1"/><rect x="925" y="730" width="1" height="1"/><rect x="933" y="730" width="1" height="1"/><rect x="941" y="730" width="1" height="1"/><rect x="949" y="730" width="1" height="1"/><rect x="957" y="730" width="1" height="1"/><rect x="965" y="730" width="1" height="1"/><rect x="973" y="730" width="1" height="1"/></g>
<rect x="12" y="797" width="40" height="1" fill="#000" />
<g fill="#c8c8c8"><rect x="53" y="797" width="1" height="1"/><rect x="61" y="797" width="1" height="1"/><rect x="69" y="797" width="1" height="1"/><rect x="77" y="797" width="1" height="1"/><rect x="85" y="797" width="1" height="1"/><rect x="93" y="797" width="1" height="1"/><rect x="101" y="797" width="1" height="1"/><rect x="109" y="797" width="1" height="1"/><rect x="117" y="797" width="1" height="1"/><rect x="125" y="797" width="1" height="1"/><rect x="133" y="797" width="1" height="1"/><rect x="141" y="797" width="1" height="1"/><rect x="149" y="797" width="1" height="1"/><rect x="157" y="797" width="1" height="1"/><rect x="165" y="797" width="1" height="1"/><rect x="173" y="797" width="1" height="1"/><rect x="181" y="797" width="1" height="1"/><rect x="189" y="797" width="1" height="1"/><rect x="197" y="797" width="1" height="1"/><rect x="205" y="797" width="1" height="1"/><rect x="213" y="797" width="1" height="1"/><rect x="221" y="797" width="1" height="1"/><rect x="229" y="797" width="1" height="1"/><rect x="237" y="797" width="1" height="1"/><rect x="245" y="797" width="1" height="1"/><rect x="253" y="797" width="1" height="1"/><rect x="261" y="797" width="1" height="1"/><rect x="269" y="797" width="1" height="1"/><rect x="277" y="797" width="1" height="1"/><rect x="285" y="797" width="1" height="1"/><rect x="293" y="797" width="1" height="1"/><rect x="301" y="797" width="1" height="1"/><rect x="309" y="797" width="1" height="1"/><rect x="317" y="797" width="1" height="1"/><rect x="325" y="797" width="1" height="1"/><rect x="333" y="797" width="1" height="1"/><rect x="341" y="797" width="1" height="1"/><rect x="349" y="797" width="1" height="1"/><rect x="357" y="797" width="1" height="1"/><rect x="365" y="797" width="1" height="1"/><rect x="373" y="797" width="1" height="1"/><rect x="381" y="797" width="1" height="1"/><rect x="389" y="797" width="1" height="1"/><rect x="397" y="797" width="1" height="1"/><rect x="405" y="797" width="1" height="1"/><rect x="413" y="797" width="1" height="1"/><rect x="421" y="797" width="1" height="1"/><rect x="429" y="797" width="1" height="1"/><rect x="437" y="797" width="1" height="1"/><rect x="445" y="797" width="1" height="1"/><rect x="453" y="797" width="1" height="1"/><rect x="461" y="797" width="1" height="1"/><rect x="469" y="797" width="1" height="1"/><rect x="477" y="797" width="1" height="1"/><rect x="485" y="797" width="1" height="1"/><rect x="493" y="797" width="1" height="1"/><rect x="501" y="797" width="1" height="1"/><rect x="509" y="797" width="1" height="1"/><rect x="517" y="797" width="1" height="1"/><rect x="525" y="797" width="1" height="1"/><rect x="533" y="797" width="1" height="1"/><rect x="541" y="797" width="1" height="1"/><rect x="549" y="797" width="1" height="1"/><rect x="557" y="797" width="1" height="1"/><rect x="565" y="797" width="1" height="1"/><rect x="573" y="797" width="1" height="1"/><rect x="581" y="797" width="1" height="1"/><rect x="589" y="797" width="1" height="1"/><rect x="597" y="797" width="1" height="1"/><rect x="605" y="797" width="1" height="1"/><rect x="613" y="797" width="1" height="1"/><rect x="621" y="797" width="1" height="1"/><rect x="629" y="797" width="1" height="1"/><rect x="637" y="797" width="1" height="1"/><rect x="645" y="797" width="1" height="1"/><rect x="653" y="797" width="1" height="1"/><rect x="661" y="797" width="1" height="1"/><rect x="669" y="797" width="1" height="1"/><rect x="677" y="797" width="1" height="1"/><rect x="685" y="797" width="1" height="1"/><rect x="693" y="797" width="1" height="1"/><rect x="701" y="797" width="1" height="1"/><rect x="709" y="797" width="1" height="1"/><rect x="717" y="797" width="1" height="1"/><rect x="725" y="797" width="1" height="1"/><rect x="733" y="797" width="1" height="1"/><rect x="741" y="797" width="1" height="1"/><rect x="749" y="797" width="1" height="1"/><rect x="757" y="797" width="1" height="1"/><rect x="765" y="797" width="1" height="1"/><rect x="773" y="797" width="1" height="1"/><rect x="781" y="797" width="1" height="1"/><rect x="789" y="797" width="1" height="1"/><rect x="797" y="797" width="1" height="1"/><rect x="805" y="797" width="1" height="1"/><rect x="813" y="797" width="1" height="1"/><rect x="821" y="797" width="1" height="1"/><rect x="829" y="797" width="1" height="1"/><rect x="837" y="797" width="1" height="1"/><rect x="845" y="797" width="1" height="1"/><rect x="853" y="797" width="1" height="1"/><rect x="861" y="797" width="1" height="1"/><rect x="869" y="797" width="1" height="1"/><rect x="877" y="797" width="1" height="1"/><rect x="885" y="797" width="1" height="1"/><rect x="893" y="797" width="1" height="1"/><rect x="901" y="797" width="1" height="1"/><rect x="909" y="797" width="1" height="1"/><rect x="917" y="797" width="1" height="1"/><rect x="925" y="797" width="1" height="1"/><rect x="933" y="797" width="1" height="1"/><rect x="941" y="797" width="1" height="1"/><rect x="949" y="797" width="1" height="1"/><rect x="957" y="797" width="1" height="1"/><rect x="965" y="797" width="1" height="1"/><rect x="973" y="797" width="1" height="1"/></g>
<rect x="166" y="798" width="1" height="10" fill="#000" />
<rect x="330" y="798" width="1" height="10" fill="#000" />
<rect x="494" y="798" width="1" height="10" fill="#000" />
<rect x="658" y="798" width="1" height="10" fill="#000" />
<rect x="822" y="798" width="1" height="10" fill="#000" />
</g>
<text x="13.39" y="133" font-size="10" fill="#000" textLength="36.36" lengthAdjust="spacingAndGlyphs" >21,20:1</text>
<text x="12.81" y="192" font-size="10" fill="#000" textLength="36.43" lengthAdjust="spacingAndGlyphs" >15.89:1</text>
<text x="12.79" y="259" font-size="10" fill="#000" textLength="36.34" lengthAdjust="spacingAndGlyphs" >11.91:1</text>
<text x="13.32" y="326" font-size="10" fill="#000" textLength="30.42" lengthAdjust="spacingAndGlyphs" >8.93:1</text>
<text x="13.58" y="394" font-size="10" fill="#000" textLength="29.84" lengthAdjust="spacingAndGlyphs" >6.69:1</text>
<text x="13.38" y="461" font-size="10" fill="#000" textLength="30.03" lengthAdjust="spacingAndGlyphs" >5.02:1</text>
<text x="13.28" y="528" font-size="10" fill="#000" textLength="30.39" lengthAdjust="spacingAndGlyphs" >3.76:1</text>
<text x="13.40" y="596" font-size="10" fill="#000" textLength="30.38" lengthAdjust="spacingAndGlyphs" >2.82:1</text>
<text x="13.57" y="663" font-size="10" fill="#000" textLength="29.86" lengthAdjust="spacingAndGlyphs" >2.11:1</text>
<text x="13.15" y="730" font-size="10" fill="#000" textLength="30.34" lengthAdjust="spacingAndGlyphs" >1.58:1</text>
<text x="13.15" y="797" font-size="10" fill="#000" textLength="30.34" lengthAdjust="spacingAndGlyphs" >1.19:1</text>
<text x="169.38" y="808" font-size="10" fill="#000" textLength="26.83" lengthAdjust="spacingAndGlyphs" >5.000</text>
<text x="332.78" y="808" font-size="10" fill="#000" textLength="33.73" lengthAdjust="spacingAndGlyphs" >10.000</text>
<text x="496.78" y="808" font-size="10" fill="#000" textLength="33.73" lengthAdjust="spacingAndGlyphs" >15.000</text>
<text x="661.60" y="808" font-size="10" fill="#000" textLength="32.59" lengthAdjust="spacingAndGlyphs" >20.000</text>
<text x="825.60" y="808" font-size="10" fill="#000" textLength="32.59" lengthAdjust="spacingAndGlyphs" >25.000</text>
<text x="991.07" y="808" font-size="10" fill="#000" textLength="18.74" lengthAdjust="spacingAndGlyphs" >kHz</text>
<clipPath id="plotclip"><rect x="52" y="124" width="929" height="674"/></clipPath>
<polyline points="70.5,118.5 70.5,124.5 70.5,133.5 71.5,147.5 72.5,163.5 73.5,169.5 74.5,175.5 75.5,189.5 76.5,202.5 77.5,207.5 78.5,213.5 79.5,224.5 83.5,249.5 87.5,283.5 90.5,323.5 93.5,323.5 95.5,330.5 97.5,330.5 98.5,319.5 102.5,302.5 107.5,285.5 110.5,277.5 116.5,277.5 118.5,268.5 121.5,259.5 125.5,249.5 129.5,229.5 133.5,218.5 136.5,207.5 138.5,207.5 140.5,218.5 141.5,207.5 142.5,218.5 144.5,218.5 145.5,207.5 151.5,207.5 153.5,218.5 156.5,241.5 160.5,274.5 165.5,312.5 169.5,359.5 171.5,382.5 174.5,391.5 178.5,418.5 181.5,427.5 184.5,428.5 189.5,441.5 193.5,441.5 197.5,428.5 201.5,419.5 208.5,419.5 209.5,415.5 214.5,415.5 217.5,424.5 219.5,419.5 222.5,419.5 223.5,415.5 224.5,419.5 226.5,408.5 229.5,396.5 236.5,382.5 239.5,371.5 243.5,359.5 245.5,345.5 247.5,337.5 250.5,330.5 253.5,330.5 254.5,323.5 263.5,323.5 264.5,330.5 267.5,330.5 270.5,340.5 273.5,365.5 274.5,368.5 277.5,368.5 278.5,362.5 279.5,362.5 284.5,377.5 287.5,390.5 289.5,385.5 294.5,385.5 295.5,390.5 300.5,390.5 302.5,395.5 306.5,395.5 307.5,400.5 340.5,400.5 341.5,395.5 343.5,400.5 353.5,400.5 354.5,404.5 357.5,405.5 360.5,414.5 362.5,417.5 366.5,427.5 369.5,443.5 372.5,448.5 376.5,468.5 380.5,475.5 382.5,484.5 386.5,494.5 390.5,502.5 395.5,508.5 400.5,514.5 411.5,514.5 412.5,511.5 416.5,508.5 422.5,502.5 429.5,497.5 434.5,489.5 436.5,484.5 441.5,479.5 447.5,470.5 452.5,462.5 457.5,452.5 462.5,445.5 467.5,438.5 472.5,433.5 484.5,433.5 485.5,437.5 490.5,437.5 495.5,442.5 499.5,449.5 505.5,456.5 511.5,466.5 517.5,474.5 523.5,482.5 528.5,487.5 533.5,493.5 537.5,496.5 543.5,499.5 552.5,499.5 553.5,502.5 589.5,502.5 590.5,499.5 598.5,499.5 599.5,502.5 615.5,502.5 616.5,505.5 627.5,505.5 628.5,508.5 633.5,508.5 635.5,511.5 644.5,511.5 645.5,514.5 647.5,511.5 649.5,514.5 651.5,511.5 659.5,511.5 661.5,508.5 666.5,508.5 667.5,505.5 673.5,505.5 674.5,502.5 680.5,502.5 681.5,499.5 687.5,499.5 688.5,496.5 700.5,496.5 702.5,499.5 706.5,499.5 710.5,502.5 719.5,512.5 727.5,521.5 736.5,531.5 745.5,540.5 750.5,546.5 754.5,549.5 765.5,557.5 777.5,562.5 784.5,564.5 791.5,562.5 797.5,564.5 805.5,564.5 808.5,568.5 816.5,568.5 821.5,574.5 831.5,581.5 840.5,591.5 851.5,599.5 861.5,607.5 870.5,615.5 881.5,623.5 892.5,629.5 903.5,637.5 915.5,648.5 926.5,656.5 937.5,666.5 952.5,674.5 963.5,679.5 972.5,685.5 985.5,690.5" fill="none" stroke="#00ff00" stroke-width="1" stroke-linejoin="miter" shape-rendering="crispEdges" clip-path="url(#plotclip)"/>
<g shape-rendering="crispEdges">
<rect x="1037" y="103" width="4" height="1" fill="#a0a0a0" />
<rect x="1119" y="103" width="152" height="1" fill="#a0a0a0" />
<rect x="1037" y="103" width="1" height="81" fill="#a0a0a0" />
<rect x="1270" y="103" width="1" height="81" fill="#a0a0a0" />
<rect x="1037" y="183" width="234" height="1" fill="#a0a0a0" />
</g>
<text x="1042.71" y="108" font-size="12.5" font-weight="bold" fill="#5e5e5e" textLength="73.33" lengthAdjust="spacingAndGlyphs" >Frequency</text>
<text x="1045.87" y="134" font-size="12.5" fill="#000" textLength="59.54" lengthAdjust="spacingAndGlyphs" >Start (Hz)</text>
<text x="1045.95" y="162" font-size="12.5" fill="#000" textLength="57.37" lengthAdjust="spacingAndGlyphs" >Stop (Hz)</text>
<g shape-rendering="crispEdges">
<rect x="1111" y="119" width="150" height="21" fill="#ffffff" />
<rect x="1111" y="119" width="150" height="1" fill="#8a8a8a" />
<rect x="1111" y="139" width="150" height="1" fill="#8a8a8a" />
<rect x="1111" y="119" width="1" height="21" fill="#8a8a8a" />
<rect x="1260" y="119" width="1" height="21" fill="#8a8a8a" />
<rect x="1111" y="140" width="151" height="1" fill="#ffffff" />
<rect x="1261" y="119" width="1" height="22" fill="#ffffff" />
</g>
<g shape-rendering="crispEdges">
<rect x="1111" y="147" width="150" height="21" fill="#ffffff" />
<rect x="1111" y="147" width="150" height="1" fill="#8a8a8a" />
<rect x="1111" y="167" width="150" height="1" fill="#8a8a8a" />
<rect x="1111" y="147" width="1" height="21" fill="#8a8a8a" />
<rect x="1260" y="147" width="1" height="21" fill="#8a8a8a" />
<rect x="1111" y="168" width="151" height="1" fill="#ffffff" />
<rect x="1261" y="147" width="1" height="22" fill="#ffffff" />
</g>
<text x="1193.62" y="134" font-size="12.5" fill="#000" textLength="63.87" lengthAdjust="spacingAndGlyphs" >1.500.000</text>
<text x="1186.05" y="162" font-size="12.5" fill="#000" textLength="71.37" lengthAdjust="spacingAndGlyphs" >29.998.933</text>
<g shape-rendering="crispEdges">
<rect x="1037" y="199" width="4" height="1" fill="#a0a0a0" />
<rect x="1132" y="199" width="139" height="1" fill="#a0a0a0" />
<rect x="1037" y="199" width="1" height="644" fill="#a0a0a0" />
<rect x="1270" y="199" width="1" height="644" fill="#a0a0a0" />
<rect x="1037" y="842" width="234" height="1" fill="#a0a0a0" />
</g>
<text x="1042.53" y="204" font-size="12.5" font-weight="bold" fill="#5e5e5e" textLength="87.44" lengthAdjust="spacingAndGlyphs" >Presets (Hz)</text>
<g shape-rendering="crispEdges">
<rect x="1046" y="215" width="215" height="1" fill="#7a7a7a" />
<rect x="1046" y="832" width="215" height="1" fill="#7a7a7a" />
<rect x="1046" y="215" width="1" height="618" fill="#7a7a7a" />
<rect x="1260" y="215" width="1" height="618" fill="#7a7a7a" />
<rect x="1261" y="215" width="1" height="619" fill="#ffffff" />
<rect x="1046" y="833" width="216" height="1" fill="#ffffff" />
<rect x="1045" y="214" width="217" height="1" fill="#f0f0f0" />
<rect x="1047" y="216" width="212" height="1" fill="#7a7a7a" />
<rect x="1047" y="216" width="1" height="582" fill="#7a7a7a" />
<rect x="1258" y="216" width="1" height="582" fill="#7a7a7a" />
<rect x="1257" y="217" width="1" height="19" fill="#707070" />
<rect x="1047" y="797" width="212" height="1" fill="#7a7a7a" />
<rect x="1259" y="216" width="1" height="582" fill="#ffffff" />
<rect x="1048" y="217" width="209" height="18" fill="#e0e0e0" />
<rect x="1048" y="217" width="209" height="1" fill="#ffffff" />
<rect x="1048" y="217" width="1" height="18" fill="#ffffff" />
<rect x="1048" y="235" width="209" height="1" fill="#707070" />
<rect x="1152" y="217" width="1" height="19" fill="#707070" />
<rect x="1153" y="218" width="1" height="17" fill="#ffffff" />
<rect x="1048" y="236" width="209" height="48" fill="#ffffff" />
<rect x="1048" y="251" width="209" height="1" fill="#e4e4e4" />
<rect x="1048" y="267" width="209" height="1" fill="#e4e4e4" />
<rect x="1152" y="236" width="1" height="48" fill="#e4e4e4" />
<rect x="1048" y="236" width="104" height="1" fill="#c0d4ea" />
<rect x="1048" y="250" width="104" height="1" fill="#c0d4ea" />
<rect x="1048" y="236" width="1" height="15" fill="#c0d4ea" />
<rect x="1151" y="236" width="1" height="15" fill="#c0d4ea" />
<rect x="1049" y="237" width="102" height="1" fill="#c0d4ea" />
<rect x="1049" y="249" width="102" height="1" fill="#c0d4ea" />
<rect x="1049" y="237" width="1" height="13" fill="#c0d4ea" />
<rect x="1150" y="237" width="1" height="13" fill="#c0d4ea" />
<rect x="1153" y="236" width="104" height="1" fill="#c0d4ea" />
<rect x="1153" y="250" width="104" height="1" fill="#c0d4ea" />
<rect x="1153" y="236" width="1" height="15" fill="#c0d4ea" />
<rect x="1256" y="236" width="1" height="15" fill="#c0d4ea" />
<rect x="1154" y="237" width="102" height="1" fill="#c0d4ea" />
<rect x="1154" y="249" width="102" height="1" fill="#c0d4ea" />
<rect x="1154" y="237" width="1" height="13" fill="#c0d4ea" />
<rect x="1255" y="237" width="1" height="13" fill="#c0d4ea" />
</g>
<text x="1085.52" y="231" font-size="12.5" fill="#000" textLength="30.38" lengthAdjust="spacingAndGlyphs" >Start</text>
<text x="1191.42" y="231" font-size="12.5" fill="#000" textLength="29.09" lengthAdjust="spacingAndGlyphs" >Stop</text>
<text x="1085.62" y="248" font-size="12.5" fill="#000" textLength="63.87" lengthAdjust="spacingAndGlyphs" >1.500.000</text>
<text x="1085.97" y="264" font-size="12.5" fill="#000" textLength="63.61" lengthAdjust="spacingAndGlyphs" >6.950.000</text>
<text x="1078.07" y="280" font-size="12.5" fill="#000" textLength="71.25" lengthAdjust="spacingAndGlyphs" >13.950.000</text>
<text x="1183.33" y="248" font-size="12.5" fill="#000" textLength="71.01" lengthAdjust="spacingAndGlyphs" >29.999.364</text>
<text x="1191.09" y="264" font-size="12.5" fill="#000" textLength="63.33" lengthAdjust="spacingAndGlyphs" >7.250.000</text>
<text x="1183.07" y="280" font-size="12.5" fill="#000" textLength="71.25" lengthAdjust="spacingAndGlyphs" >14.400.000</text>
<g shape-rendering="crispEdges">
<rect x="1103" y="804" width="29" height="22" fill="url(#gSmallBtn)" />
<rect x="1103" y="804" width="29" height="1" fill="#7a7a7a" />
<rect x="1103" y="825" width="29" height="1" fill="#7a7a7a" />
<rect x="1103" y="804" width="1" height="22" fill="#7a7a7a" />
<rect x="1131" y="804" width="1" height="22" fill="#7a7a7a" />
<rect x="1132" y="804" width="1" height="23" fill="#ffffff" />
<rect x="1103" y="826" width="30" height="1" fill="#ffffff" />
</g>
<g shape-rendering="crispEdges">
<rect x="1138" y="804" width="29" height="22" fill="url(#gSmallBtn)" />
<rect x="1138" y="804" width="29" height="1" fill="#7a7a7a" />
<rect x="1138" y="825" width="29" height="1" fill="#7a7a7a" />
<rect x="1138" y="804" width="1" height="22" fill="#7a7a7a" />
<rect x="1166" y="804" width="1" height="22" fill="#7a7a7a" />
<rect x="1167" y="804" width="1" height="23" fill="#ffffff" />
<rect x="1138" y="826" width="30" height="1" fill="#ffffff" />
</g>
<g shape-rendering="crispEdges">
<rect x="1173" y="804" width="29" height="22" fill="url(#gSmallBtn)" />
<rect x="1173" y="804" width="29" height="1" fill="#7a7a7a" />
<rect x="1173" y="825" width="29" height="1" fill="#7a7a7a" />
<rect x="1173" y="804" width="1" height="22" fill="#7a7a7a" />
<rect x="1201" y="804" width="1" height="22" fill="#7a7a7a" />
<rect x="1202" y="804" width="1" height="23" fill="#ffffff" />
<rect x="1173" y="826" width="30" height="1" fill="#ffffff" />
</g>
<defs><radialGradient id="gOl" cx="0.4" cy="0.35" r="0.7"><stop offset="0" stop-color="#c8d040"/><stop offset="1" stop-color="#8a9a10"/></radialGradient>
<radialGradient id="gRd" cx="0.4" cy="0.35" r="0.7"><stop offset="0" stop-color="#ff5050"/><stop offset="1" stop-color="#c00010"/></radialGradient></defs>
<circle cx="1118" cy="815" r="7.6" fill="url(#gOl)"/><path d="M1114 815h8M1118 811v8" stroke="#f0f0d0" stroke-width="1.6"/>
<circle cx="1152.5" cy="815" r="7.6" fill="url(#gRd)" stroke="#e0e0e0" stroke-width="0.6"/><path d="M1149.3 811.8l6.4 6.4M1155.7 811.8l-6.4 6.4" stroke="#fff" stroke-width="2.4"/>
<circle cx="1187.5" cy="815" r="7" fill="#00a040"/><path d="M1187.5 810.5l-4 4h2.4v4h3.2v-4h2.4z" fill="#f4f4f4"/>
<g shape-rendering="crispEdges">
<rect x="1037" y="858" width="4" height="1" fill="#a0a0a0" />
<rect x="1084" y="858" width="187" height="1" fill="#a0a0a0" />
<rect x="1037" y="858" width="1" height="151" fill="#a0a0a0" />
<rect x="1270" y="858" width="1" height="151" fill="#a0a0a0" />
<rect x="1037" y="1008" width="234" height="1" fill="#a0a0a0" />
</g>
<text x="1042.70" y="863" font-size="12.5" font-weight="bold" fill="#5e5e5e" textLength="38.73" lengthAdjust="spacingAndGlyphs" >Mode</text>
<g shape-rendering="crispEdges">
<rect x="1046" y="874" width="215" height="21" fill="#8a8a8a" />
<rect x="1047" y="875" width="213" height="19" fill="url(#gGray)" />
<rect x="1047" y="875" width="213" height="19" fill="url(#gGrayH)" />
<rect x="1047" y="875" width="213" height="1" fill="#ffffff" />
<rect x="1047" y="875" width="1" height="19" fill="#ffffff" />
<rect x="1261" y="874" width="1" height="22" fill="#ffffff" />
<rect x="1046" y="895" width="216" height="1" fill="#ffffff" />
</g>
<text x="1049.07" y="889" font-size="12.5" fill="#000" textLength="62.27" lengthAdjust="spacingAndGlyphs" >Reflection</text>
<path d="M1249.5 883h9l-4.5 4.5z" fill="#000"/>
<g shape-rendering="crispEdges">
<rect x="1119" y="902" width="142" height="21" fill="#8a8a8a" />
<rect x="1120" y="903" width="140" height="19" fill="url(#gGray)" />
<rect x="1120" y="903" width="140" height="19" fill="url(#gGrayH)" />
<rect x="1120" y="903" width="140" height="1" fill="#ffffff" />
<rect x="1120" y="903" width="1" height="19" fill="#ffffff" />
<rect x="1261" y="902" width="1" height="22" fill="#ffffff" />
<rect x="1119" y="923" width="143" height="1" fill="#ffffff" />
</g>
<text x="1171.61" y="917" font-size="12.5" fill="#000" textLength="36.58" lengthAdjust="spacingAndGlyphs" >Zoom</text>
<rect x="1172" y="918" width="9" height="1" fill="#000" shape-rendering="crispEdges"/>
<g shape-rendering="crispEdges">
<rect x="1046" y="935" width="12" height="1" fill="#808080" />
<rect x="1046" y="946" width="12" height="1" fill="#808080" />
<rect x="1046" y="935" width="1" height="12" fill="#808080" />
<rect x="1057" y="935" width="1" height="12" fill="#808080" />
<rect x="1047" y="936" width="10" height="1" fill="#ffffff" />
<rect x="1047" y="936" width="1" height="10" fill="#ffffff" />
<rect x="1058" y="935" width="1" height="13" fill="#ffffff" />
<rect x="1046" y="947" width="13" height="1" fill="#ffffff" />
</g>
<text x="1062.39" y="946" font-size="12.5" fill="#000" textLength="49.89" lengthAdjust="spacingAndGlyphs" >Freerun</text>
<rect x="1071" y="947" width="5" height="1" fill="#000" shape-rendering="crispEdges"/>
<g shape-rendering="crispEdges">
<rect x="1119" y="930" width="142" height="21" fill="#8a8a8a" />
<rect x="1120" y="931" width="140" height="19" fill="url(#gGreenV)" />
<rect x="1120" y="931" width="140" height="19" fill="url(#gGreenH)" />
<rect x="1120" y="931" width="140" height="1" fill="#ffffff" />
<rect x="1120" y="931" width="1" height="19" fill="#ffffff" />
<rect x="1261" y="930" width="1" height="22" fill="#ffffff" />
<rect x="1119" y="951" width="143" height="1" fill="#ffffff" />
</g>
<text x="1153.39" y="945" font-size="12.5" fill="#000" textLength="73.12" lengthAdjust="spacingAndGlyphs" >Single scan</text>
<rect x="1154" y="946" width="8" height="1" fill="#000" shape-rendering="crispEdges"/>
<g shape-rendering="crispEdges">
<rect x="1126" y="963" width="128" height="6" fill="#8c8c8c" />
<rect x="1127" y="964" width="126" height="4" fill="#e6e6e6" />
<rect x="1127" y="964" width="126" height="1" fill="#c4c4c4" />
<rect x="1126" y="969" width="129" height="1" fill="#f4f4f4" />
<rect x="1254" y="963" width="1" height="7" fill="#f4f4f4" />
</g>
<path d="M1184.5 958.5h14v8l-7 7l-7 -7z" fill="#fcfcfc" stroke="#303030" stroke-width="1"/>
<g fill="#909090" shape-rendering="crispEdges"><rect x="1187" y="960" width="1" height="1"/><rect x="1190" y="960" width="1" height="1"/><rect x="1193" y="960" width="1" height="1"/><rect x="1188" y="962" width="1" height="1"/><rect x="1191" y="962" width="1" height="1"/><rect x="1194" y="962" width="1" height="1"/><rect x="1187" y="964" width="1" height="1"/><rect x="1190" y="964" width="1" height="1"/><rect x="1193" y="964" width="1" height="1"/></g>
<g fill="#b4c8e0" shape-rendering="crispEdges">
<rect x="1126" y="978" width="1" height="6" fill="#b0c4e0" />
<rect x="1134" y="978" width="1" height="4" fill="#c4d4e8" />
<rect x="1142" y="978" width="1" height="4" fill="#c4d4e8" />
<rect x="1150" y="978" width="1" height="4" fill="#c4d4e8" />
<rect x="1158" y="978" width="1" height="6" fill="#b0c4e0" />
<rect x="1166" y="978" width="1" height="4" fill="#c4d4e8" />
<rect x="1174" y="978" width="1" height="4" fill="#c4d4e8" />
<rect x="1182" y="978" width="1" height="4" fill="#c4d4e8" />
<rect x="1190" y="978" width="1" height="6" fill="#b0c4e0" />
<rect x="1198" y="978" width="1" height="4" fill="#c4d4e8" />
<rect x="1206" y="978" width="1" height="4" fill="#c4d4e8" />
<rect x="1214" y="978" width="1" height="4" fill="#c4d4e8" />
<rect x="1222" y="978" width="1" height="6" fill="#b0c4e0" />
<rect x="1230" y="978" width="1" height="4" fill="#c4d4e8" />
<rect x="1238" y="978" width="1" height="4" fill="#c4d4e8" />
<rect x="1246" y="978" width="1" height="4" fill="#c4d4e8" />
<rect x="1254" y="978" width="1" height="6" fill="#b0c4e0" />
</g>
<text x="1045.90" y="984" font-size="12.5" fill="#000" textLength="43.50" lengthAdjust="spacingAndGlyphs" >Speed:</text>
<text x="1120.62" y="997" font-size="12.5" fill="#000" textLength="11.14" lengthAdjust="spacingAndGlyphs" >-8</text>
<text x="1152.25" y="997" font-size="12.5" fill="#000" textLength="11.55" lengthAdjust="spacingAndGlyphs" >-4</text>
<text x="1186.97" y="997" font-size="12.5" fill="#000" textLength="8.05" lengthAdjust="spacingAndGlyphs" >0</text>
<text x="1218.88" y="997" font-size="12.5" fill="#000" textLength="7.57" lengthAdjust="spacingAndGlyphs" >4</text>
<text x="1249.65" y="997" font-size="12.5" fill="#000" textLength="8.16" lengthAdjust="spacingAndGlyphs" >8</text>
<text x="31.17" y="834" font-size="12.5" fill="#000" textLength="61.16" lengthAdjust="spacingAndGlyphs" >Freq. (Hz)</text>
<text x="186.40" y="834" font-size="12.5" fill="#000" textLength="45.14" lengthAdjust="spacingAndGlyphs" >RL (dB)</text>
<text x="296.37" y="834" font-size="12.5" fill="#000" textLength="37.03" lengthAdjust="spacingAndGlyphs" >RP (°)</text>
<text x="407.12" y="834" font-size="12.5" fill="#000" textLength="41.66" lengthAdjust="spacingAndGlyphs" >|Z| (Ω)</text>
<text x="517.20" y="834" font-size="12.5" fill="#000" textLength="39.40" lengthAdjust="spacingAndGlyphs" >Rs (Ω)</text>
<text x="628.61" y="834" font-size="12.5" fill="#000" textLength="40.18" lengthAdjust="spacingAndGlyphs" >Xs (Ω)</text>
<text x="739.09" y="834" font-size="12.5" fill="#000" textLength="35.52" lengthAdjust="spacingAndGlyphs" >Theta</text>
<text x="849.54" y="834" font-size="12.5" fill="#000" textLength="28.19" lengthAdjust="spacingAndGlyphs" >SWR</text>
<g shape-rendering="crispEdges">
<rect x="32" y="843" width="149" height="1" fill="#a4a4a4" />
<rect x="32" y="864" width="149" height="1" fill="#a4a4a4" />
<rect x="32" y="843" width="1" height="22" fill="#a4a4a4" />
<rect x="180" y="843" width="1" height="22" fill="#a4a4a4" />
<rect x="187" y="843" width="104" height="1" fill="#a4a4a4" />
<rect x="187" y="864" width="104" height="1" fill="#a4a4a4" />
<rect x="187" y="843" width="1" height="22" fill="#a4a4a4" />
<rect x="290" y="843" width="1" height="22" fill="#a4a4a4" />
<rect x="297" y="843" width="105" height="1" fill="#a4a4a4" />
<rect x="297" y="864" width="105" height="1" fill="#a4a4a4" />
<rect x="297" y="843" width="1" height="22" fill="#a4a4a4" />
<rect x="401" y="843" width="1" height="22" fill="#a4a4a4" />
<rect x="408" y="843" width="104" height="1" fill="#a4a4a4" />
<rect x="408" y="864" width="104" height="1" fill="#a4a4a4" />
<rect x="408" y="843" width="1" height="22" fill="#a4a4a4" />
<rect x="511" y="843" width="1" height="22" fill="#a4a4a4" />
<rect x="518" y="843" width="105" height="1" fill="#a4a4a4" />
<rect x="518" y="864" width="105" height="1" fill="#a4a4a4" />
<rect x="518" y="843" width="1" height="22" fill="#a4a4a4" />
<rect x="622" y="843" width="1" height="22" fill="#a4a4a4" />
<rect x="629" y="843" width="104" height="1" fill="#a4a4a4" />
<rect x="629" y="864" width="104" height="1" fill="#a4a4a4" />
<rect x="629" y="843" width="1" height="22" fill="#a4a4a4" />
<rect x="732" y="843" width="1" height="22" fill="#a4a4a4" />
<rect x="739" y="843" width="105" height="1" fill="#a4a4a4" />
<rect x="739" y="864" width="105" height="1" fill="#a4a4a4" />
<rect x="739" y="843" width="1" height="22" fill="#a4a4a4" />
<rect x="843" y="843" width="1" height="22" fill="#a4a4a4" />
<rect x="850" y="843" width="104" height="1" fill="#a4a4a4" />
<rect x="850" y="864" width="104" height="1" fill="#a4a4a4" />
<rect x="850" y="843" width="1" height="22" fill="#a4a4a4" />
<rect x="953" y="843" width="1" height="22" fill="#a4a4a4" />
<rect x="32" y="871" width="149" height="1" fill="#a4a4a4" />
<rect x="32" y="892" width="149" height="1" fill="#a4a4a4" />
<rect x="32" y="871" width="1" height="22" fill="#a4a4a4" />
<rect x="180" y="871" width="1" height="22" fill="#a4a4a4" />
<rect x="187" y="871" width="104" height="1" fill="#a4a4a4" />
<rect x="187" y="892" width="104" height="1" fill="#a4a4a4" />
<rect x="187" y="871" width="1" height="22" fill="#a4a4a4" />
<rect x="290" y="871" width="1" height="22" fill="#a4a4a4" />
<rect x="297" y="871" width="105" height="1" fill="#a4a4a4" />
<rect x="297" y="892" width="105" height="1" fill="#a4a4a4" />
<rect x="297" y="871" width="1" height="22" fill="#a4a4a4" />
<rect x="401" y="871" width="1" height="22" fill="#a4a4a4" />
<rect x="408" y="871" width="104" height="1" fill="#a4a4a4" />
<rect x="408" y="892" width="104" height="1" fill="#a4a4a4" />
<rect x="408" y="871" width="1" height="22" fill="#a4a4a4" />
<rect x="511" y="871" width="1" height="22" fill="#a4a4a4" />
<rect x="518" y="871" width="105" height="1" fill="#a4a4a4" />
<rect x="518" y="892" width="105" height="1" fill="#a4a4a4" />
<rect x="518" y="871" width="1" height="22" fill="#a4a4a4" />
<rect x="622" y="871" width="1" height="22" fill="#a4a4a4" />
<rect x="629" y="871" width="104" height="1" fill="#a4a4a4" />
<rect x="629" y="892" width="104" height="1" fill="#a4a4a4" />
<rect x="629" y="871" width="1" height="22" fill="#a4a4a4" />
<rect x="732" y="871" width="1" height="22" fill="#a4a4a4" />
<rect x="739" y="871" width="105" height="1" fill="#a4a4a4" />
<rect x="739" y="892" width="105" height="1" fill="#a4a4a4" />
<rect x="739" y="871" width="1" height="22" fill="#a4a4a4" />
<rect x="843" y="871" width="1" height="22" fill="#a4a4a4" />
<rect x="850" y="871" width="104" height="1" fill="#a4a4a4" />
<rect x="850" y="892" width="104" height="1" fill="#a4a4a4" />
<rect x="850" y="871" width="1" height="22" fill="#a4a4a4" />
<rect x="953" y="871" width="1" height="22" fill="#a4a4a4" />
<rect x="32" y="899" width="149" height="1" fill="#a4a4a4" />
<rect x="32" y="920" width="149" height="1" fill="#a4a4a4" />
<rect x="32" y="899" width="1" height="22" fill="#a4a4a4" />
<rect x="180" y="899" width="1" height="22" fill="#a4a4a4" />
<rect x="187" y="899" width="104" height="1" fill="#a4a4a4" />
<rect x="187" y="920" width="104" height="1" fill="#a4a4a4" />
<rect x="187" y="899" width="1" height="22" fill="#a4a4a4" />
<rect x="290" y="899" width="1" height="22" fill="#a4a4a4" />
<rect x="297" y="899" width="105" height="1" fill="#a4a4a4" />
<rect x="297" y="920" width="105" height="1" fill="#a4a4a4" />
<rect x="297" y="899" width="1" height="22" fill="#a4a4a4" />
<rect x="401" y="899" width="1" height="22" fill="#a4a4a4" />
<rect x="408" y="899" width="104" height="1" fill="#a4a4a4" />
<rect x="408" y="920" width="104" height="1" fill="#a4a4a4" />
<rect x="408" y="899" width="1" height="22" fill="#a4a4a4" />
<rect x="511" y="899" width="1" height="22" fill="#a4a4a4" />
<rect x="518" y="899" width="105" height="1" fill="#a4a4a4" />
<rect x="518" y="920" width="105" height="1" fill="#a4a4a4" />
<rect x="518" y="899" width="1" height="22" fill="#a4a4a4" />
<rect x="622" y="899" width="1" height="22" fill="#a4a4a4" />
<rect x="629" y="899" width="104" height="1" fill="#a4a4a4" />
<rect x="629" y="920" width="104" height="1" fill="#a4a4a4" />
<rect x="629" y="899" width="1" height="22" fill="#a4a4a4" />
<rect x="732" y="899" width="1" height="22" fill="#a4a4a4" />
<rect x="739" y="899" width="105" height="1" fill="#a4a4a4" />
<rect x="739" y="920" width="105" height="1" fill="#a4a4a4" />
<rect x="739" y="899" width="1" height="22" fill="#a4a4a4" />
<rect x="843" y="899" width="1" height="22" fill="#a4a4a4" />
<rect x="32" y="927" width="149" height="1" fill="#a4a4a4" />
<rect x="32" y="948" width="149" height="1" fill="#a4a4a4" />
<rect x="32" y="927" width="1" height="22" fill="#a4a4a4" />
<rect x="180" y="927" width="1" height="22" fill="#a4a4a4" />
<rect x="187" y="927" width="104" height="1" fill="#a4a4a4" />
<rect x="187" y="948" width="104" height="1" fill="#a4a4a4" />
<rect x="187" y="927" width="1" height="22" fill="#a4a4a4" />
<rect x="290" y="927" width="1" height="22" fill="#a4a4a4" />
<rect x="297" y="927" width="105" height="1" fill="#a4a4a4" />
<rect x="297" y="948" width="105" height="1" fill="#a4a4a4" />
<rect x="297" y="927" width="1" height="22" fill="#a4a4a4" />
<rect x="401" y="927" width="1" height="22" fill="#a4a4a4" />
<rect x="408" y="927" width="104" height="1" fill="#a4a4a4" />
<rect x="408" y="948" width="104" height="1" fill="#a4a4a4" />
<rect x="408" y="927" width="1" height="22" fill="#a4a4a4" />
<rect x="511" y="927" width="1" height="22" fill="#a4a4a4" />
<rect x="518" y="927" width="105" height="1" fill="#a4a4a4" />
<rect x="518" y="948" width="105" height="1" fill="#a4a4a4" />
<rect x="518" y="927" width="1" height="22" fill="#a4a4a4" />
<rect x="622" y="927" width="1" height="22" fill="#a4a4a4" />
<rect x="629" y="927" width="104" height="1" fill="#a4a4a4" />
<rect x="629" y="948" width="104" height="1" fill="#a4a4a4" />
<rect x="629" y="927" width="1" height="22" fill="#a4a4a4" />
<rect x="732" y="927" width="1" height="22" fill="#a4a4a4" />
<rect x="739" y="927" width="105" height="1" fill="#a4a4a4" />
<rect x="739" y="948" width="105" height="1" fill="#a4a4a4" />
<rect x="739" y="927" width="1" height="22" fill="#a4a4a4" />
<rect x="843" y="927" width="1" height="22" fill="#a4a4a4" />
<rect x="850" y="927" width="104" height="1" fill="#a4a4a4" />
<rect x="850" y="948" width="104" height="1" fill="#a4a4a4" />
<rect x="850" y="927" width="1" height="22" fill="#a4a4a4" />
<rect x="953" y="927" width="1" height="22" fill="#a4a4a4" />
<rect x="32" y="955" width="149" height="1" fill="#a4a4a4" />
<rect x="32" y="976" width="149" height="1" fill="#a4a4a4" />
<rect x="32" y="955" width="1" height="22" fill="#a4a4a4" />
<rect x="180" y="955" width="1" height="22" fill="#a4a4a4" />
<rect x="187" y="955" width="104" height="1" fill="#a4a4a4" />
<rect x="187" y="976" width="104" height="1" fill="#a4a4a4" />
<rect x="187" y="955" width="1" height="22" fill="#a4a4a4" />
<rect x="290" y="955" width="1" height="22" fill="#a4a4a4" />
<rect x="297" y="955" width="105" height="1" fill="#a4a4a4" />
<rect x="297" y="976" width="105" height="1" fill="#a4a4a4" />
<rect x="297" y="955" width="1" height="22" fill="#a4a4a4" />
<rect x="401" y="955" width="1" height="22" fill="#a4a4a4" />
<rect x="408" y="955" width="104" height="1" fill="#a4a4a4" />
<rect x="408" y="976" width="104" height="1" fill="#a4a4a4" />
<rect x="408" y="955" width="1" height="22" fill="#a4a4a4" />
<rect x="511" y="955" width="1" height="22" fill="#a4a4a4" />
<rect x="518" y="955" width="105" height="1" fill="#a4a4a4" />
<rect x="518" y="976" width="105" height="1" fill="#a4a4a4" />
<rect x="518" y="955" width="1" height="22" fill="#a4a4a4" />
<rect x="622" y="955" width="1" height="22" fill="#a4a4a4" />
<rect x="629" y="955" width="104" height="1" fill="#a4a4a4" />
<rect x="629" y="976" width="104" height="1" fill="#a4a4a4" />
<rect x="629" y="955" width="1" height="22" fill="#a4a4a4" />
<rect x="732" y="955" width="1" height="22" fill="#a4a4a4" />
<rect x="739" y="955" width="105" height="1" fill="#a4a4a4" />
<rect x="739" y="976" width="105" height="1" fill="#a4a4a4" />
<rect x="739" y="955" width="1" height="22" fill="#a4a4a4" />
<rect x="843" y="955" width="1" height="22" fill="#a4a4a4" />
<rect x="850" y="955" width="104" height="1" fill="#a4a4a4" />
<rect x="850" y="976" width="104" height="1" fill="#a4a4a4" />
<rect x="850" y="955" width="1" height="22" fill="#a4a4a4" />
<rect x="953" y="955" width="1" height="22" fill="#a4a4a4" />
<rect x="32" y="983" width="149" height="1" fill="#a4a4a4" />
<rect x="32" y="1004" width="149" height="1" fill="#a4a4a4" />
<rect x="32" y="983" width="1" height="22" fill="#a4a4a4" />
<rect x="180" y="983" width="1" height="22" fill="#a4a4a4" />
<rect x="187" y="983" width="104" height="1" fill="#a4a4a4" />
<rect x="187" y="1004" width="104" height="1" fill="#a4a4a4" />
<rect x="187" y="983" width="1" height="22" fill="#a4a4a4" />
<rect x="290" y="983" width="1" height="22" fill="#a4a4a4" />
<rect x="297" y="983" width="105" height="1" fill="#a4a4a4" />
<rect x="297" y="1004" width="105" height="1" fill="#a4a4a4" />
<rect x="297" y="983" width="1" height="22" fill="#a4a4a4" />
<rect x="401" y="983" width="1" height="22" fill="#a4a4a4" />
<rect x="408" y="983" width="104" height="1" fill="#a4a4a4" />
<rect x="408" y="1004" width="104" height="1" fill="#a4a4a4" />
<rect x="408" y="983" width="1" height="22" fill="#a4a4a4" />
<rect x="511" y="983" width="1" height="22" fill="#a4a4a4" />
<rect x="518" y="983" width="105" height="1" fill="#a4a4a4" />
<rect x="518" y="1004" width="105" height="1" fill="#a4a4a4" />
<rect x="518" y="983" width="1" height="22" fill="#a4a4a4" />
<rect x="622" y="983" width="1" height="22" fill="#a4a4a4" />
<rect x="629" y="983" width="104" height="1" fill="#a4a4a4" />
<rect x="629" y="1004" width="104" height="1" fill="#a4a4a4" />
<rect x="629" y="983" width="1" height="22" fill="#a4a4a4" />
<rect x="732" y="983" width="1" height="22" fill="#a4a4a4" />
<rect x="739" y="983" width="105" height="1" fill="#a4a4a4" />
<rect x="739" y="1004" width="105" height="1" fill="#a4a4a4" />
<rect x="739" y="983" width="1" height="22" fill="#a4a4a4" />
<rect x="843" y="983" width="1" height="22" fill="#a4a4a4" />
<rect x="850" y="983" width="104" height="1" fill="#a4a4a4" />
<rect x="850" y="1004" width="104" height="1" fill="#a4a4a4" />
<rect x="850" y="983" width="1" height="22" fill="#a4a4a4" />
<rect x="953" y="983" width="1" height="22" fill="#a4a4a4" />
</g>
<text x="15.19" y="858" font-size="12.5" fill="#000" textLength="11.31" lengthAdjust="spacingAndGlyphs" >M</text>
<text x="15.38" y="886" font-size="12.5" fill="#000" textLength="6.96" lengthAdjust="spacingAndGlyphs" >1</text>
<g shape-rendering="crispEdges">
<rect x="960" y="876" width="12" height="1" fill="#a0a0a0" />
<rect x="960" y="887" width="12" height="1" fill="#a0a0a0" />
<rect x="960" y="876" width="1" height="12" fill="#a0a0a0" />
<rect x="971" y="876" width="1" height="12" fill="#a0a0a0" />
</g>
<path d="M980.3 879.2l1.2 0.6l2 4.6l1.3 -10.2h6.2v2.6" fill="none" stroke="#404040" stroke-width="1.1"/>
<path d="M988.9 890v-7.4l2.6 4.2l2.6 -4.2v7.4" fill="none" stroke="#8c8c8c" stroke-width="1"/>
<path d="M1001.2 874.7h4.6M1003.5 874.7v4.2" fill="none" stroke="#6e6e6e" stroke-width="1.1"/>
<path d="M1005.7 877.2v3.2q0 1.3 1.6 1.3q1.6 0 1.6 -1.3v-3.2" fill="none" stroke="#6e6e6e" stroke-width="1.1"/>
<path d="M1009.7 887v-5l2.7 5v-5" fill="none" stroke="#6e6e6e" stroke-width="1.1"/>
<path d="M1016.9 884.5h-2.4v5h2.4M1014.5 887h2" fill="none" stroke="#6e6e6e" stroke-width="1.1"/>
<text x="15.96" y="914" font-size="12.5" fill="#000" textLength="9.10" lengthAdjust="spacingAndGlyphs" >Δ</text>
<text x="15.66" y="942" font-size="12.5" fill="#000" textLength="8.27" lengthAdjust="spacingAndGlyphs" >2</text>
<g shape-rendering="crispEdges">
<rect x="960" y="932" width="12" height="1" fill="#a0a0a0" />
<rect x="960" y="943" width="12" height="1" fill="#a0a0a0" />
<rect x="960" y="932" width="1" height="12" fill="#a0a0a0" />
<rect x="971" y="932" width="1" height="12" fill="#a0a0a0" />
</g>
<path d="M980.3 935.2l1.2 0.6l2 4.6l1.3 -10.2h6.2v2.6" fill="none" stroke="#404040" stroke-width="1.1"/>
<path d="M988.9 946v-7.4l2.6 4.2l2.6 -4.2v7.4" fill="none" stroke="#8c8c8c" stroke-width="1"/>
<path d="M1001.2 930.7h4.6M1003.5 930.7v4.2" fill="none" stroke="#6e6e6e" stroke-width="1.1"/>
<path d="M1005.7 933.2v3.2q0 1.3 1.6 1.3q1.6 0 1.6 -1.3v-3.2" fill="none" stroke="#6e6e6e" stroke-width="1.1"/>
<path d="M1009.7 943v-5l2.7 5v-5" fill="none" stroke="#6e6e6e" stroke-width="1.1"/>
<path d="M1016.9 940.5h-2.4v5h2.4M1014.5 943h2" fill="none" stroke="#6e6e6e" stroke-width="1.1"/>
<text x="15.57" y="970" font-size="12.5" fill="#000" textLength="8.35" lengthAdjust="spacingAndGlyphs" >3</text>
<g shape-rendering="crispEdges">
<rect x="960" y="960" width="12" height="1" fill="#a0a0a0" />
<rect x="960" y="971" width="12" height="1" fill="#a0a0a0" />
<rect x="960" y="960" width="1" height="12" fill="#a0a0a0" />
<rect x="971" y="960" width="1" height="12" fill="#a0a0a0" />
</g>
<path d="M980.3 963.2l1.2 0.6l2 4.6l1.3 -10.2h6.2v2.6" fill="none" stroke="#404040" stroke-width="1.1"/>
<path d="M988.9 974v-7.4l2.6 4.2l2.6 -4.2v7.4" fill="none" stroke="#8c8c8c" stroke-width="1"/>
<path d="M1001.2 958.7h4.6M1003.5 958.7v4.2" fill="none" stroke="#6e6e6e" stroke-width="1.1"/>
<path d="M1005.7 961.2v3.2q0 1.3 1.6 1.3q1.6 0 1.6 -1.3v-3.2" fill="none" stroke="#6e6e6e" stroke-width="1.1"/>
<path d="M1009.7 971v-5l2.7 5v-5" fill="none" stroke="#6e6e6e" stroke-width="1.1"/>
<path d="M1016.9 968.5h-2.4v5h2.4M1014.5 971h2" fill="none" stroke="#6e6e6e" stroke-width="1.1"/>
<text x="16.12" y="998" font-size="12.5" fill="#000" textLength="8.01" lengthAdjust="spacingAndGlyphs" >4</text>
<g shape-rendering="crispEdges">
<rect x="960" y="988" width="12" height="1" fill="#a0a0a0" />
<rect x="960" y="999" width="12" height="1" fill="#a0a0a0" />
<rect x="960" y="988" width="1" height="12" fill="#a0a0a0" />
<rect x="971" y="988" width="1" height="12" fill="#a0a0a0" />
</g>
<path d="M980.3 991.2l1.2 0.6l2 4.6l1.3 -10.2h6.2v2.6" fill="none" stroke="#404040" stroke-width="1.1"/>
<path d="M988.9 1002v-7.4l2.6 4.2l2.6 -4.2v7.4" fill="none" stroke="#8c8c8c" stroke-width="1"/>
<path d="M1001.2 986.7h4.6M1003.5 986.7v4.2" fill="none" stroke="#6e6e6e" stroke-width="1.1"/>
<path d="M1005.7 989.2v3.2q0 1.3 1.6 1.3q1.6 0 1.6 -1.3v-3.2" fill="none" stroke="#6e6e6e" stroke-width="1.1"/>
<path d="M1009.7 999v-5l2.7 5v-5" fill="none" stroke="#6e6e6e" stroke-width="1.1"/>
<path d="M1016.9 996.5h-2.4v5h2.4M1014.5 999h2" fill="none" stroke="#6e6e6e" stroke-width="1.1"/>
<g shape-rendering="crispEdges">
<rect x="10" y="1023" width="498" height="1" fill="#d4c8d0" />
<rect x="10" y="1039" width="498" height="1" fill="#d4c8d0" />
<rect x="10" y="1023" width="1" height="17" fill="#d4c8d0" />
<rect x="507" y="1023" width="1" height="17" fill="#d4c8d0" />
<rect x="11" y="1024" width="496" height="15" fill="#00ff00" />
<rect x="516" y="1023" width="186" height="1" fill="#b8b8b8" />
<rect x="516" y="1039" width="186" height="1" fill="#b8b8b8" />
<rect x="516" y="1023" width="1" height="17" fill="#b8b8b8" />
<rect x="701" y="1023" width="1" height="17" fill="#b8b8b8" />
<rect x="710" y="1023" width="99" height="1" fill="#d4c8d0" />
<rect x="710" y="1039" width="99" height="1" fill="#d4c8d0" />
<rect x="710" y="1023" width="1" height="17" fill="#d4c8d0" />
<rect x="808" y="1023" width="1" height="17" fill="#d4c8d0" />
<rect x="711" y="1024" width="97" height="15" fill="#00ff00" />
<rect x="817" y="1023" width="462" height="1" fill="#b8b8b8" />
<rect x="817" y="1039" width="462" height="1" fill="#b8b8b8" />
<rect x="817" y="1023" width="1" height="17" fill="#b8b8b8" />
<rect x="1278" y="1023" width="1" height="17" fill="#b8b8b8" />
</g>
<text x="11.60" y="1036" font-size="12.5" fill="#000" textLength="161.80" lengthAdjust="spacingAndGlyphs" >Job 1/1 - 100% completed</text>
<text x="518.99" y="1036" font-size="12.5" fill="#000" textLength="102.36" lengthAdjust="spacingAndGlyphs" >miniVNA/ttyUSB0</text>
<text x="712.84" y="1036" font-size="12.5" fill="#000" textLength="42.80" lengthAdjust="spacingAndGlyphs" >2000/1</text>
</svg></body></html>
